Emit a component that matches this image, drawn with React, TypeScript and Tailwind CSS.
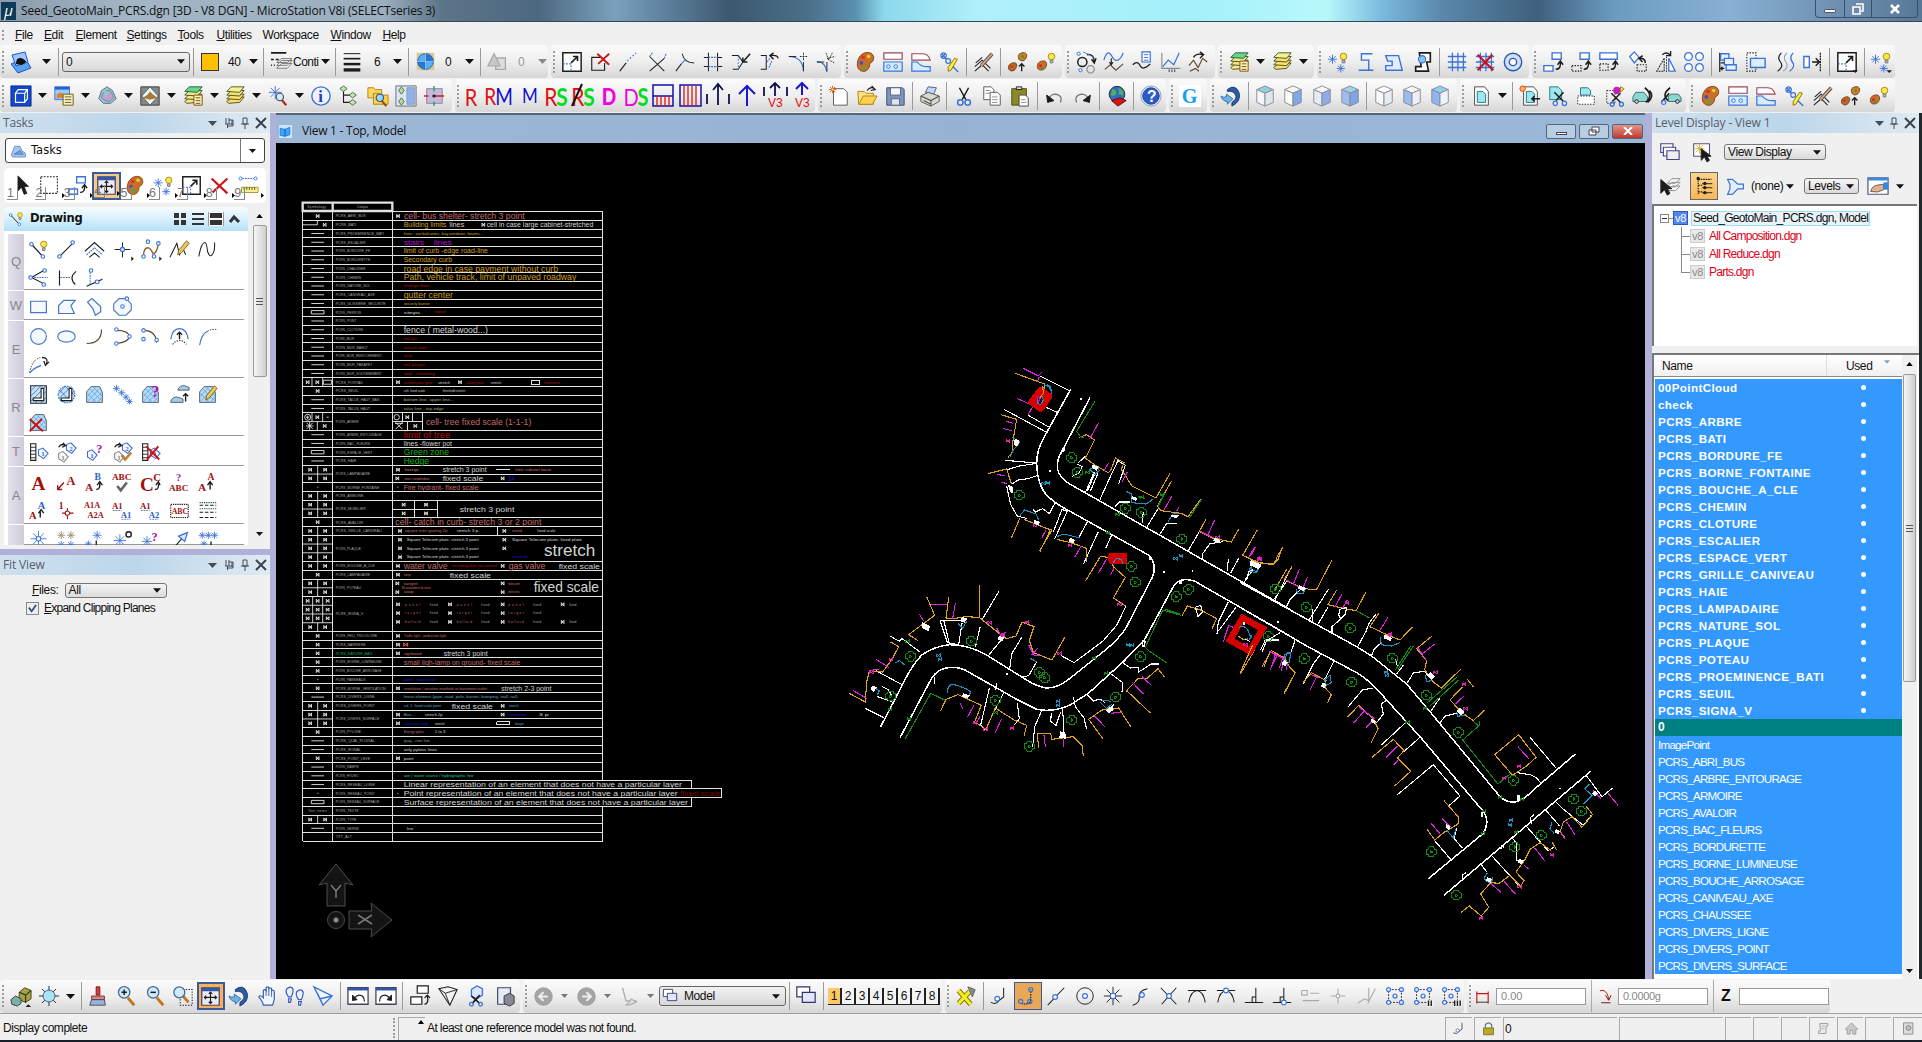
import React from "react";

/* ---------- icon primitives ---------- */
type Shape = [d: string, stroke?: string, fill?: string, width?: number, dash?: string];
type Glyph = { t: string; x: number; y: number; s: number; c: string; f?: string };
type Item = Shape | Glyph;

const B = "#3a72d8";
const K = "#1c1c1c";
const G = "#8a8a8a";
const R = "#c81414";
const N = "none";
const o = (x: number, y: number, r: number) => `M${x - r} ${y}a${r} ${r} 0 1 0 ${2 * r} 0a${r} ${r} 0 1 0 ${-2 * r} 0`;
const box = (x: number, y: number, w: number, h: number) => `M${x} ${y}h${w}v${h}h${-w}z`;
const T = (t: string, x: number, y: number, s: number, c: string, f = "Liberation Serif"): Glyph => ({ t, x, y, s, c, f });

const bulb: Item[] = [[o(18, 6, 3.6), "#a08a20", "#ffe640"], ["M16.5 10h3v3h-3z", "#777", "#bbb"]];
const palette: Item[] = [
  ["M12 2c7-2 11 3 9 8-1 3-4 2-4 5 0 4-3 8-8 7-5-1-6-6-5-11C5 7 8 3 12 2z", "#7a4210", "#c8702a"],
  [o(10, 7, 2), N, "#e03020"], [o(16, 6, 2), N, "#e8d030"], [o(8, 13, 2), N, "#3a50d0"], [o(11, 18, 2), N, "#40b040"],
];
const pencil: Item[] = [["M20 2l3 3-9 11-4 2 1-5z", "#7a5a20", "#e8c860"]];
const star = (x: number, y: number, r: number, col = B): Shape => [
  `M${x - r} ${y}h${2 * r}M${x} ${y - r}v${2 * r}M${x - r * 0.7} ${y - r * 0.7}l${r * 1.4} ${r * 1.4}M${x + r * 0.7} ${y - r * 0.7}l${-r * 1.4} ${r * 1.4}`, col, N, 1,
];
const layers = (top: string, mid: string): Item[] => [
  ["M3 18l5-4 14-1-5 6-12 1z", "#4a4a20", mid], ["M3 15l5-5 14 0-5 6z", "#4a4a20", mid],
  ["M3 11l5-5 14 0-5 6z", "#4a4a20", mid], ["M3 7l5-5 14 0-5 6z", "#2c5a30", top],
];
const cube = (a: string, b: string, c: string): Item[] => [
  ["M12 1l9 4-9 4-9-4z", G, a], ["M3 5l9 4v14l-9-4z", G, b], ["M21 5l-9 4v14l9-4z", G, c],
];
const hatchPoly: Item[] = [
  ["M3 21V9l5-6h10l3 7v11z", "#456", "#b4dcf6"],
  ["M4 14l9-10M4 20L18 5M9 21L21 9M15 21l6-6M4 11l10 10M7 6l13 13M11 4l10 10", "#5a96d8", N, 0.8],
];
const page: Item[] = [["M5 2h11l4 5v15H5z", "#444", "#fff"], ["M8 7h6l3 3v9H8z", "#2a7080", "#9ce8f0"]];
const magnifier: Item[] = [["M14 14l7 8", "#c07820", N, 3.2], [o(10, 8, 6.2), "#456a90", "#cfe8fb", 1.4]];
const swirl: Item[] = [
  ["M8 5q9-7 13 4 2 9-8 14v-4q6-4 4-8-2-5-9-4z", "#14386c", "#2e5ca4"], ["M1 12q2 2 6 1v-3l7 5-6 6v-3q-5 0-7-6z", "#2e6ca4", "#6ab4ea"],
];
const cutter: Item[] = [["M7 3l7 13M17 3l-7 13", K, N, 1.6], [o(8, 19, 3), B, N, 1.6], [o(16, 19, 3), B, N, 1.6]];
const tag = (x: number, y: number, n: string, col: string): Item[] => [
  [`M${x - 5} ${y - 4}l5-2 6 6-5 6-6-4z`, col, "#f4f8ff", 1.2], T(n, x - 2, y + 3, 8, col),
];
const snapBox: Item[] = [[box(5, 5, 14, 14), K, N, 1, "2 1.5"], ...[[5, 5], [19, 5], [5, 19], [19, 19], [12, 12]].map(([x, y]) => [o(x, y, 2.2), B, "#e8f0ff", 1.3] as Shape)];
const corner: Shape = ["M18 21h6l-3 3z", N, K];
const scaleBox: Item[] = [[box(2, 2, 20, 20), K, "#fff", 1.6], ["M2 14h9v8", B, N, 1.2, "2 1.5"], ["M11 13l7-7M13 6h5v5", K, N, 1.8]];
const bulbStars: Item[] = [star(6, 9, 5), star(15, 19, 4.5), ...bulb];

const icons: Record<string, Item[]> = {
  attr: [["M2 14l14-6 6 10-13 5z", "#1b5ac0", "#5aa0f0"], ["M3 5l13-3 3 10-12 4z", "#1b5ac0", "#9cc8ff"], ["M7 14q0-7 5-6 5 2 5 4l-4 3z", N, "#111"]],
  lstyle: [["M1 3h16M1 10h3M6 10h3M1 16h1M4 16h1", K, N, 1.6], ["M7 19l5-5h11l-5 5zM7 16l5-5h11l-5 5zM7 13l5-4h11l-5 4z", "#777", "#f4f4f4"]],
  weight: [["M2 2h20", K, N, 1.2], ["M2 8h20", K, N, 2], ["M2 14.500h20", K, N, 3], ["M2 21.500h20", K, N, 4]],
  globe: [[box(2, 2, 20, 20), N, "#d6c890"], [o(12, 12, 9), "#2464b8", "#58b0f4"], ["M12 3v18M3 12h18", "#fff", N, 1], ["M12 3a9 9 0 0 1 9 9h-9zM12 21a9 9 0 0 1-9-9h9z", N, "#2478d0"]],
  prio: [[box(10, 8, 11, 13), "#aaa", "#ddd", 1.6], ["M8 3l7 14H1z", "#aaa", "#c8c8c8", 1.4]],
  scaleBox,
  scaleBox2: [...scaleBox, corner],
  delBox: [["M12 7H3v14h14v-8", K, N, 1.2], ["M9 3l13 12M22 3L10 14", R, N, 2]],
  line1: [["M3 22l7-9", K, N, 1.2], ["M11 11l10-9", B, N, 1.2, "2 2"]],
  crossX: [["M4 22L20 8M20 22L4 6", K, N, 1.1], ["M4 6l3-4M20 8l2-5", B, N, 1.2, "2 1"]],
  trimT: [["M9 3q2 10 13 10M2 22l6-8", K, N, 1.1], ["M8 14l4-4", B, N, 1.2]],
  hash: [["M7 2v20M17 2v20M2 7h5M17 7h5M2 17h5M17 17h5", K, N, 1.1], ["M7 7h10M7 17h10", B, N, 1.2, "2 1"]],
  chamfer: [["M2 5h7l5 7-5 8H3", K, N, 1.1], ["M9 5v15", B, N, 1, "2 1.5"], ["M22 3l-7 8M14 7v5h5", K, N, 1.6]],
  bracket: [["M3 5h6v15H3", K, N, 1.1], ["M10 12l3-4M12 18l3-7", B, N, 1.2, "2 1"], ["M22 8q-1-4-8-3M17 2l-4 3 4 4", K, N, 1.5]],
  fillet: [["M2 6q15 0 16 16", B, N, 1.3], ["M18 2v8M14 6h8", K, N, 1, "2 1"], ["M18 12v10M2 6h8", K, N, 1]],
  starCorner: [["M2 12q9-1 11 11", B, N, 1.3], ["M2 12h8M13 12v10", K, N, 1], ["M13 8l9-2M12 2l3 8M21 13l-7-4M19 2l-4 7", K, N, 0.9, "2 1"]],
  palette,
  boxes: [[box(2, 2, 20, 7), "#9a4858", "#fff", 1.3], [box(2, 12, 20, 10), B, "#d4ecff", 1.3], [o(7, 17, 2), B, N], [o(15, 17, 2), B, N]],
  shapes: [["M2 3h12q6 0 8 7H2z", "#9a4858", "#fff", 1.2], ["M2 12h6q4 6 14 5v5H2z", B, "#d4ecff", 1.3]],
  penlink: [["M3 3l5 6M3 7l4-4M13 15l8 8", B, N, 1.5], [o(5, 5, 3), B, N, 1.3], [o(10, 11, 2.6), B, N, 1.3], ["M17 8l3 1-7 12-3 1 0-4z", "#857000", "#ffee40"]],
  pencils: [["M2 17l8-7 9 9M2 22l8-7 7 7M3 13l7-6", K, N, 1.1], ["M9 16L21 3", "#6a4848", N, 4], ["M9 16L21 3", "#c8b088", N, 2]],
  palettes2: [["M4 14c5-3 8 0 6 4-1 4-6 5-8 2-1-3 0-5 2-6z", "#7a4210", "#b8682a"], ["M14 3c5-3 9 0 7 4-1 4-6 5-8 2-1-3-1-5 1-6z", "#7a4210", "#c8802a"], [o(5, 17, 1.3), N, "#e02020"], [o(17, 6, 1.5), N, "#30a040"], ["M16 22v-8M13 17l3-3 3 3", K, N, 1.5]],
  paletteBulb: [["M5 12c6-3 9 0 7 5-1 4-7 5-9 2-1-3 0-6 2-7z", "#7a4210", "#c8702a"], [o(6, 16, 1.6), N, "#e02020"], [o(8, 19, 1.4), N, "#30a040"], ...bulb],
  circArrow: [[o(8, 12, 5), K, N, 1.6], [o(4, 3, 1.8), B, N], [o(17, 20, 4), G, N, 1.3], [o(6, 21, 1.8), B, N], ["M13 4q8-1 8 8M18 9l3 4 2-5", K, N, 1.6], ["M9 1l12 6", B, N, 1]],
  curveDown: [["M1 10C5-4 9 4 11 8s8 3 11-6", B, N, 1.4], ["M2 20l6-5 6 6 8-7", "#5c4a30", N, 1.2], ["M9 8v7M7 12l2 3 2-3", K, N, 1.2]],
  curveList: [["M2 15q5-5 8 1t11-2", K, N, 1.4], [box(12, 1, 9, 11), B, "#fff", 1.3], ["M14 4h5M14 7h5M14 10h5", B, N, 1]],
  graph: [["M2 2v17h20", G, N, 1.2], ["M3 17l6-7 6 5 6-13", B, N, 1.3], ["M10 20v3M13 20v3M16 20v3", K, N, 0.9]],
  curveArrow: [["M1 16l5-6 5 8 5-10 5 4M2 22l6-3 4 3", "#5c4a30", N, 1.3], ["M6 7q3-5 10-3M13 1l4 3-4 4", K, N, 1.5]],
  stackGreen: [...layers("#60d890", "#f6e88a"), [box(13, 11, 9, 11), "#6a5010", "#fff2b0"], ["M15 14h5M15 17h5M15 20h5", "#6a5010", N, 1]],
  stackYellow: layers("#fff08a", "#f6e070"),
  bulbStars,
  bulbStars2: [...bulbStars, corner],
  polyBlue: [["M19 3H7v7h8v11H4M15 21h5", B, N, 1.5]],
  polyBlue2: [["M3 5h14l4 16H3v-5h7v-5H5z", B, "#e0edff", 1.5]],
  polyBlack: [["M8 2h12v10h-4l2 10H4v-5h6z", K, "#fff", 1.8], [o(11, 9, 4), B, "#8ac0f0", 1.2]],
  grid: [["M7 2v20M13 2v20M19 2v20M2 6h20M2 12h20M2 18h20", B, N, 1.4]],
  gridX: [["M7 2v20M13 2v20M19 2v20M2 6h20M2 12h20M2 18h20", B, N, 1.4], ["M4 4l17 17M20 4L4 21", R, N, 2.4]],
  donut: [[o(12, 12, 9.5), "#2a58b0", "#cfe0f8", 1.5], [o(12, 12, 4), "#2a58b0", "#fff", 1.5]],
  copyUp: [[box(11, 2, 10, 7), B, "#fff", 1.5], [box(2, 16, 10, 6), B, "#fff", 1.5], ["M15 20q6 0 5-8M17 15l3-4 3 4", K, N, 1.6]],
  moveUp: [[box(11, 2, 10, 7), B, "#fff", 1.5], [box(2, 16, 10, 6), K, N, 1.2, "1.5 1.5"], ["M15 20q6 0 5-8M17 15l3-4 3 4", K, N, 1.6]],
  stretch: [[box(2, 2, 19, 7), B, "#fff", 1.5], [box(2, 14, 9, 7), K, N, 1.2, "1.5 1.5"], ["M14 20q6 0 5-8M16 15l3-4 3 4", K, N, 1.6]],
  rotate: [["M3 6l5-5 5 6-5 6z", B, "#fff", 1.4], [box(11, 15, 10, 7), K, N, 1.2, "1.5 1.5"], ["M20 13q0-5-6-5M17 5l-4 3 4 4", K, N, 1.6]],
  mirror: [["M10 8v14H2z", K, N, 1.1, "2 1"], ["M15 8v14h7z", B, "#fff", 1.4], ["M8 4q5-4 9 1M17 0v5h-5", K, N, 1.5], ["M12.500 6v17", K, N, 0.9, "2 1"]],
  array: [[6, 6], [18, 6], [6, 18], [18, 18]].map(([x, y]) => [o(x, y, 4.2), B, "#fff", 1.4] as Shape),
  align: [["M3 2v21", K, N, 1.3], [box(4, 3, 9, 7), B, "#e8f2ff", 1.4], [box(8, 8, 10, 7), B, "#e8f2ff", 1.4], [box(10, 15, 11, 6), B, "#e8f2ff", 1.4], ["M8 19H4M6 17l-2 2 2 2M8 13H4", K, N, 1.3]],
  overlap: [[box(2, 2, 10, 20), K, N, 1.2, "1.5 1.5"], [box(6, 8, 16, 10), B, "#dcecff", 1.5]],
  curves2: [["M8 2q-5 5-1 10T4 22", K, N, 1.3], ["M14 2q-5 5-1 10t-3 10", "#8899bb", N, 1.1], ["M21 2q-5 5-1 10t-3 10", B, N, 1.4]],
  snapEnd: [[box(2, 6, 6, 12), B, "#fff", 1.5], ["M11 12h7M15 8l4 4-4 4", K, N, 1.6], ["M20 2v20", K, N, 1.4, "2 1"]],
  cubeBtn: [[box(1, 1, 22, 22), "#0a2a90", "#1248c8"], ["M6 9h10v10H6zM6 9l3-4h10v10l-3 4M16 9l3-4", "#fff", N, 1.3]],
  imgList: [[box(2, 2, 16, 14), B, "#8fd0ff"], [box(2, 2, 16, 3), N, "#2a60c8"], ["M4 15v-5l5-2 4 5z", N, "#e08030"], [box(11, 10, 11, 12), "#6a5010", "#fff2b0"], ["M13 13h7M13 16h7M13 19h7", "#555", N, 1]],
  clipVol: [["M3 15l3-9 6-4 6 4 4 9-6 5H8z", "#5a6a88", "#98c4d4"], ["M6 14q1-7 6-8t7 8l-4 4-5-1z", "#68a", "#c4a0cc"], ["M8 5l6 3-3 5z", N, "#80d8c8"]],
  mountain: [[box(2, 2, 20, 20), "#333", "#888"], ["M12 2l9 10-9 10-9-10z", "#555", "#e4f8f4"], ["M4 14l5-3 3-4 3 3 5 4-8 2z", N, "#a87838"]],
  searchStar: [star(9, 8, 7), ["M15 15l6 7", "#c02020", N, 2.4], [o(14, 13, 4), "#456", "#d8e8f8", 1.3]],
  info: [[o(12, 12, 10), B, "#eef4ff", 1.5], { t: "i", x: 9, y: 18, s: 18, c: "#1c3cc0", f: "Liberation Serif" }],
  tree: [["M6 4v15h8M6 11h8", K, N, 1.2], ["M6 1l4 3-4 3-4-3zM16 8l4 3-4 3-4-3zM16 16l4 3-4 3-4-3z", "#4a6a3a", "#c8e0b8"]],
  folderSearch: [["M1 3h6l2 2h7v9H1z", "#b08010", "#ffd860"], ["M7 9h6l2 2h8v10H7z", "#b08010", "#ffd040"], ["M16 17l5 6", "#805010", N, 2.2], [o(14, 14, 4), "#2a5a90", "#9cd8ff", 1.3]],
  keyPress: [[box(1, 1, 22, 22), "#667", "#dce6f4"], ["M7 2l3 4-3 4-3-4zM7 14l3 4-3 4-3-4z", "#4a6a3a", "#b8d8a0"], [box(13, 3, 8, 18), "#89b", "#8fb4e8"]],
  target: [[box(4, 4, 17, 16), "#888", "#c8b8e0"], ["M12 12h11M1 12h5", "#d02020", N, 1.4], ["M12 1v6M12 18v5", "#20a060", N, 1.5], ["M10 12h4M12 10v4", "#222", N, 1.4]],
  newFile: [["M6 4h11l4 4v14H6z", "#555", "#fff"], star(5, 5, 4, "#e04010"), [o(5, 5, 1.5), "#e08000", "#ffe060"]],
  open: [["M2 7h7l2 2h8v12H3z", "#b08010", "#ffe080"], ["M3 21l5-9h15l-5 9z", "#b08010", "#ffd250"], ["M12 6q4-5 8-2M17 1l4 4-5 1", K, N, 1.3]],
  save: [["M3 3h17l2 2v17H3z", "#3a4a70", "#8094c0"], [box(7, 3, 11, 8), "#567", "#f4f6fa"], [box(8, 15, 9, 7), "#567", "#dfe4ee"]],
  printer: [["M7 8l3-6 9 1-3 7z", "#557", "#bcd8f8"], ["M2 12l8-4 12 4v6l-9 5-11-5z", "#555", "#d8d8d0"], ["M2 12l11 5 9-5M13 17v6M5 17l8 4", "#555", N, 1.2]],
  cut: cutter,
  copy: [["M3 2h8l3 3v11H3z", "#555", "#fff"], ["M10 8h8l3 3v11H10z", "#555", "#fff"], ["M5 6h5M5 9h5M12 13h6M12 16h6M12 19h6", G, N, 1]],
  paste: [[box(3, 4, 16, 18), "#4a4a10", "#8a8a28"], ["M8 5V2h6v3z", K, "#ddd"], ["M11 11h7l3 3v9H11z", "#444", "#fff"], ["M13 16h5M13 19h6", G, N, 1]],
  undo: [["M19 19q3-8-6-9-3 0-7 4", "#777", N, 1.3], ["M4 11l1 8 7-2z", K, K]],
  redo: [["M5 19q-3-8 6-9 3 0 7 4", "#777", N, 1.3], ["M20 11l-1 8-7-2z", K, K]],
  world: [[o(12, 10, 8.5), "#223", "#3070c0"], ["M7 4q5 1 4 6-3 3-6 1M14 3q6 3 5 8l-5-1z", N, "#50b060"], ["M6 17l9-3 7 3-9 6z", "#600", "#d01818"]],
  help: [[o(12, 12, 11), "#8898b0", "#f4f6fa"], [o(12, 12, 9), "#1a3a90", "#2a5cc8"], { t: "?", x: 7.5, y: 18, s: 17, c: "#fff", f: "Liberation Sans" }],
  google: [[box(0, 0, 24, 24), N, "#fff"], { t: "G", x: 3, y: 19.5, s: 22, c: "#18a0f0", f: "Liberation Serif" }],
  swirl,
  cubeT: cube("#8fd0e8", "#f4f6fa", "#e0e6f0"), cubeR: cube("#f4f6fa", "#fdfdfd", "#80a8e8"), cubeB: cube("#f4f6fa", "#e4eaf8", "#8cacec"),
  cubeF: cube("#9cd0ec", "#a0bcf0", "#80a4e8"), cubeW: cube("#fdfdfd", "#fafafc", "#e8ecf4"), cubeL: cube("#f4f6fa", "#9cbcf0", "#eef0f8"), cubeA: cube("#8fd0f0", "#90b4f0", "#f0f4fa"),
  page,
  pageIn: [...page, ["M23 15h-9M17 12l-3 3 3 3", K, N, 1.6], [o(4, 4, 3), "#e04010", "#ffb060"]],
  pageCut: [["M3 2h9l4 4v10H3z", "#2a7080", "#9ce8f0"], ["M8 8l10 10M18 8L10 17", K, N, 1.6], [o(9, 20, 2.4), B, N, 1.4], [o(19, 20, 2.4), B, N, 1.4]],
  pageDash: [["M6 3h8l3 3v5H6z", "#2a7080", "#9ce8f0"], [box(3, 12, 18, 9), K, "#fff", 1, "1.5 1.5"]],
  pageBrush: [[box(3, 6, 9, 14), K, N, 1, "1.5 1.5"], [o(14, 6, 4), N, "#c020c0"], ["M8 9l10 10M18 9L9 18", K, N, 1.6], ["M18 2l4 2-4 4z", "#a70", "#fd6"], [o(9, 21, 2.2), B, N, 1.4], [o(19, 21, 2.2), B, N, 1.4]],
  carR: [["M1 13l3-5h9l4 5v5H1z", "#2a7070", "#8cd8d0"], [o(5, 18, 2), K, "#cce"], ["M14 3q10 8 1 16M19 6q6 6-2 13", K, N, 1.8]],
  carL: [["M9 13l3-3h8l3 4v4H9z", "#2a7070", "#8cd8d0"], [o(19, 18, 2), K, "#cce"], ["M11 3q-10 8-2 14M2 18q6-6 8-9", K, N, 1.8], [o(4, 19, 2.3), B, N, 1.3]],
  /* task tools */
  pointer: [["M8 1v17l4-4 3 8 3-1-3-8h5z", K, K]],
  fence: [[box(2, 2, 19, 19), K, "#fff", 1.2, "2 1.5"]],
  fit: [[box(2, 2, 20, 20), "#445", "#eceaf4", 1.4], [box(2, 2, 20, 4), N, "#3458a8"], ["M12 7v13M5 13h14M10 9l2-2 2 2M10 18l2 2 2-2M7 11l-2 2 2 2M17 11l2 2-2 2", K, N, 1.3]],
  del: [["M3 4l18 17M21 4L4 20", "#d01010", N, 2.4]],
  measure: [[o(3, 4, 1.8), B, N], [o(20, 4, 1.8), B, N], ["M5 4h13", B, N, 1.2, "2 1"], [box(4, 14, 19, 6), "#a09030", "#f8f090"], ["M7 14v3M10 14v3M13 14v3M16 14v3M19 14v3", K, N, 0.8]],
  smartLine: [["M4 6l12 13", K, N, 1.4], [o(4, 6, 2), B, "#fff", 1.3], [o(17, 20, 2), B, "#fff", 1.3], ...bulb],
  line: [["M4 20L19 5", K, N, 1.2], [o(4, 20, 2), B, "#fff", 1.3], [o(19, 4, 2), B, "#fff", 1.3]],
  multi: [["M1 14L12 4l11 10", K, N, 1.2], ["M3 18l9-8 9 8", B, N, 1.3, "2 1"], ["M6 21l6-5 6 5", K, N, 1.2]],
  point: [["M12 4v17M3 12h18", K, N, 1.1], [o(12, 12, 2.4), B, "#cfe0ff", 1.3], ["M22 20l3 2.500-3 2.500z", N, K]],
  spline: [["M4 20q0-10 5-10 3 0 6 7 4-1 6-11", "#8a6030", N, 1.5], [o(4, 20, 2), B, "#fff", 1.3], [o(9, 3, 2), B, "#fff", 1.3], [o(21, 5, 2), B, "#fff", 1.3], [o(16, 20, 2), B, "#fff", 1.3], ["M22 20l3 2.500-3 2.500z", N, K]],
  sketch: [["M1 21L9 5l3 13 4-7 3 7", K, N, 1.2], ...pencil],
  wave: [["M2 20Q5 4 9 4q2 0 3 10 2 6 4 5 5-3 4-15", K, N, 1.2]],
  bisect: [["M4 12L18 4M4 12l14 7", K, N, 1.2], ["M4 12h19", B, N, 1.2, "2 1"], [o(3, 12, 2), B, "#fff", 1.3], [o(19, 4, 2), B, "#fff", 1.3], [o(18, 20, 2), B, "#fff", 1.3]],
  minDist: [["M4 4v17M23 5q-9 7-1 15", K, N, 1.3], ["M5 12h12", B, N, 1.2, "2 1"]],
  angleLn: [["M3 22l18-8", K, N, 1.3], ["M7 6v14", B, N, 1.2, "2 1"], [o(8, 4, 2), B, "#fff", 1.3], [o(15, 17, 2.2), B, "#fff", 1.3]],
  rect: [[box(3, 6, 18, 13), "#4a78c0", "#f4f8ff", 1.4]],
  poly: [["M3 20v-9l6-6h13l-5 6 4 9z", "#4a78c0", "#f4f8ff", 1.4]],
  ortho: [["M4 7l5-4 10 9 0 6-6 4-3-8z", "#4a78c0", "#f4f8ff", 1.4]],
  regPoly: [["M8 3h8l6 6v7l-6 6H8l-6-6V9z", "#4a78c0", "#f4f8ff", 1.3], [o(12, 12, 2), B, "#fff", 1.2], [o(17, 3, 2), B, "#fff", 1.2]],
  circle: [[o(12, 12, 9), "#4a78c0", "#f4f8ff", 1.3]],
  ellipse: [["M2 12a10 6.500 0 1 0 20 0a10 6.500 0 1 0-20 0", "#4a78c0", "#f4f8ff", 1.3]],
  arc: [["M3 20Q20 20 20 4", "#554430", N, 1.3]],
  halfArc: [["M5 5q14 0 15 7-2 7-15 8", "#554430", N, 1.3], [o(5, 4, 2), B, "#fff", 1.2], [o(20, 12, 2), B, "#fff", 1.2], [o(5, 20, 2), B, "#fff", 1.2]],
  qArc: [["M4 5q14 0 15 14", "#554430", N, 1.3], [o(4, 5, 2), B, "#fff", 1.2], [o(4, 15, 2), B, "#fff", 1.2], [o(19, 16, 2), B, "#fff", 1.2]],
  modArc: [["M2 15Q4 3 12 3t10 12", B, N, 1.3], ["M4 21q8-9 16 0", K, N, 1.2, "1.5 1.500"], ["M12 15V7M9 10l3-3 3 3", K, N, 1.6]],
  arc2: [["M3 22Q5 9 12 6", B, N, 1.3], ["M12 6q5-3 10-2", K, N, 1.1, "1.5 1.5"]],
  arc3: [["M2 21Q5 6 14 4", K, N, 1.1, "1.5 1.5"], ["M2 22q3-5 13-9", B, N, 1.3], ["M16 4q8 0 5 8M24 9l-4 4-2-5", K, N, 1.5]],
  hatch: [[box(3, 2, 18, 20), "#223", "#c8e4f4", 1.2], ["M3 8l6-6M3 14L15 2M3 20L21 2M8 22L21 8M14 22l7-7", B, N, 1], ["M15 5v11H6v3h12V5z", K, "#fff", 1.2]],
  crossHatch: [[o(12, 12, 9.5), B, "#c8e4f4", 1.2, "2 1"], ["M4 10l7-8M3 17L17 3M8 21L21 8M4 7l14 14M10 2l12 12", B, N, 1], ["M15 5v11H6v3h12V5z", K, "#fff", 1.2]],
  pattern: hatchPoly,
  linPat: [star(5, 5, 4), star(11, 10, 4), star(16, 15, 4), star(20, 20, 3.5)],
  patQ: [...hatchPoly, T("?", 13, 15, 18, "#b010b0")],
  patMove: [["M2 20q2-6 8-5l6 2v4H2zM10 7q2-6 8-5l5 2v3z", "#456", "#a4cce8"], ["M19 20v-9M16 14l3-3 3 3", K, N, 1.6]],
  patEdit: [...hatchPoly, ...pencil],
  patDel: [...hatchPoly, ["M2 8l15 14M16 8L2 22", "#d01010", N, 2.2]],
  tags: [[box(3, 2, 6, 19), K, "#fff", 1.2], ["M3 6h6M3 10h6M3 14h6M3 18h6", K, N, 1], ...tag(17, 13, "1", "#3a6ad0")],
  tagEdit: [...tag(8, 17, "1", "#888"), ...tag(17, 7, "2", "#3a6ad0"), ["M3 6q3-5 8-2M8 1l3 3-4 2", K, N, 1.5]],
  tagQ: [...tag(9, 15, "1", "#3a6ad0"), T("?", 14, 12, 14, "#b010b0")],
  tagChk: [...tag(8, 17, "1", "#888"), ...tag(17, 7, "2", "#3a6ad0"), ["M11 15l4 5 7-8", "#c08030", N, 3], ["M3 6q3-5 8-2M8 1l3 3-4 2", K, N, 1.5]],
  tagDel: [[box(3, 2, 6, 19), K, "#fff", 1.2], ["M3 6h6M3 10h6M3 14h6M3 18h6", K, N, 1], ...tag(17, 13, "1", "#3a6ad0"), ["M7 5l15 15M21 5L8 20", "#d01010", N, 2.2]],
  tA: [T("A", 4, 20, 22, "#a01010")],
  tNote: [["M2 20l7-8M2 15v5h5", "#a01010", N, 1.6], T("A", 12, 15, 14, "#a01010")],
  tAB: [T("A", 1, 22, 13, "#a01010"), T("B", 12, 9, 11, "#3060c8"), ["M14 20q5 0 4-8M15 15l3-4 3 4", K, N, 1.6]],
  tABC: [T("ABC", 0, 9, 10.5, "#a01010"), ["M6 16l4 5 7-9", "#666", N, 3]],
  tCC: [T("C", 0, 22, 22, "#a01010"), T("C", 15, 10, 12, "#a01010"), ["M17 20q5 0 4-7M18 15l3-4 2 4", K, N, 1.5]],
  tABCq: [T("ABC", 0, 22, 10.5, "#a01010"), T("?", 8, 10, 12, "#b010b0")],
  tAa: [T("A", 1, 22, 13, "#a01010"), T("A", 12, 9, 11, "#a01010"), ["M15 20v-8M12 15l3-4 3 4", K, N, 1.6]],
  tAi: [T("A", 1, 22, 12, "#a01010"), T("A", 11, 10, 12, "#3060c8"), ["M14 20v-7M12 15l3-4 3 4", K, N, 1.6]],
  t1: [T("1", 3, 10, 11, "#a01010"), ["M13 9v13M7 15h13", "#a01010", N, 1.2], [o(13, 15, 2.5), "#a01010", "#fff", 1.2]],
  tA1A: [T("A1A", 0, 9, 9.5, "#a01010"), T("A2A", 4, 21, 9.5, "#a01010")],
  tA1: [T("A1", 0, 10, 10, "#a01010"), ["M1 12h10", B, N, 1, "2 1"], T("A1", 10, 20, 10, "#3060c8"), ["M11 22h10", B, N, 1, "2 1"]],
  tA2: [T("A1", 0, 10, 10, "#a01010"), ["M1 12h10", B, N, 1, "2 1"], T("A2", 10, 20, 10, "#3060c8"), ["M11 22h10", B, N, 1, "2 1"]],
  tBox: [[box(2, 5, 20, 15), K, N, 1.2, "1.5 1"], T("ABC", 3, 16, 9, "#a01010")],
  tLines: [["M3 3h19M3 10h19", "#206060", N, 1.2, "1.5 1"], ["M3 6h19M3 14h19M3 20h19", K, N, 1.2, "4 2"]],
  cell: [star(12, 10, 9), [o(12, 10, 2.6), B, "#fff", 1.2]],
  cells: [star(6, 6, 4.5, "#987"), star(17, 6, 4.5, "#987"), star(6, 17, 4.5), star(17, 17, 4.5)],
  cellUp: [star(15, 6, 5), star(5, 16, 4), ["M14 20v-8", K, N, 1.5]],
  cellO: [star(9, 12, 7), [o(19, 5, 3), K, N, 1.6]],
  cellQ: [star(8, 13, 6), T("?", 13, 12, 14, "#b010b0")],
  cellArr: [["M4 22L18 6", K, N, 1.3], ["M11 7l10-4-3 10z", B, "#dce8ff", 1.4]],
  cellG: [star(6, 6, 4), star(13, 6, 4), star(20, 6, 4), star(8, 16, 4), ["M16 20v-7", K, N, 1.6]],
  book: [["M2 6l9 2v13l-9-2zM20 4l-9 4v13l9-3z", "#0a50b0", "#3aa8ff"]],
  user: [["M2 18l5-13h8l3 7 5 3v6H4z", "#5a80b8", "#a8c8f4", 1.2], ["M6 17l9-6 5 6z", "#4a70b0", "#6a9ce8"]],
  /* bottom tools */
  cubes: [["M10 8l6-5 7 3v9l-6 4-7-3z", "#3a4a10", "#a8a048"], ["M10 8l7 3 6-5M17 11v8", "#2a3210", N, 1.2], ["M1 16l5-4 6 3v5l-4 3-6-2z", "#334", "#7ab0a8"], ["M17 24h6l-3-3z", N, K]],
  sun: [star(12, 12, 11, K), [o(12, 12, 6.5), "#458", "#a8e4f4"]],
  brush: [["M10 2h4v9h-4z", "#801010", "#d04040"], ["M5 12h14v4H5z", "#733", "#d88"], ["M5 16h14l1 6H3z", "#445", "#9ab4d8"]],
  zoomIn: [...magnifier, ["M7 8h6M10 5v6", K, N, 1.6]],
  zoomOut: [...magnifier, ["M7 8h6", K, N, 1.6]],
  zoomBox: [[box(9, 5, 13, 17), K, N, 1.1, "1.5 1.5"], ["M12 12l6 7", "#c07820", N, 3], [o(8, 8, 6), "#456a90", "#cfe8fb", 1.4]],
  hand: [["M8 22q0-3-5-9 1-3 5 1V6q1.500-2 3 0V3q1.500-2 3 0v1q1.500-2 3 0v2q2-1 3 1v8q-1 5-2 7z", "#3a5ca8", "#f0f5ff", 1.3], ["M11 5v7M14 4v8M17 6v7", "#3a5ca8", N, 1]],
  feet: [["M3 4q5-4 7 1 0 4-2 8H5Q1 8 3 4zM5 15h3l-1 4H5zM14 7q5-4 7 1 0 4-2 8h-3q-4-5-2-9zM16 18h3l-1 4h-2z", "#3a5cb8", "#e8f0ff", 1.3]],
  plane: [["M2 2l20 10-10 10-3-7zM2 2l10 20M9 15l13-3", B, "#eef5ff", 1.4]],
  viewPrev: [[box(1, 3, 22, 18), "#445", "#fff", 1.4], [box(1, 3, 22, 3), N, "#3458a8"], ["M19 18q0-7-6-7-2 0-5 3", K, N, 1.3], ["M6 11v6l5-1z", K, K]],
  viewNext: [[box(1, 3, 22, 18), "#445", "#fff", 1.4], [box(1, 3, 22, 3), N, "#3458a8"], ["M5 18q0-7 6-7 2 0 5 3", K, N, 1.3], ["M18 11v6l-5-1z", K, K]],
  viewCopy: [[box(9, 1, 12, 8), K, "#fff", 1.3], [box(2, 13, 12, 8), K, "#fff", 1.3], ["M17 21q5-1 3-9M17 14l3-3 3 3", K, N, 1.4]],
  cone: [["M2 4l10-2 10 3-8 17z", K, "#f4f4f4", 1.1], ["M2 4l7 5 13-4M9 9l5 13", K, N, 1]],
  clipCube: [["M7 5l6-4 6 3v7l-6 4-6-3z", B, "#d8e8ff", 1.4], ["M7 12l9 8M16 11l-8 9", K, N, 1.8], [o(7, 21, 2), B, N, 1.4], [o(17, 21, 2), B, N, 1.4]],
  mask: [["M4 3h14v16l-4 2H4z", "#446", "#e4ecf8", 1.3], ["M11 12l6-3 5 3v8l-5 3-6-3z", "#333", "#889"]],
  back: [[o(12, 12, 10), "#999", "#a4a4a4"], ["M17 12H8M12 7l-5 5 5 5", "#eee", N, 2.4]],
  fwd: [[o(12, 12, 10), "#999", "#a4a4a4"], ["M7 12h9M12 7l5 5-5 5", "#eee", N, 2.4]],
  slope: [["M4 2l4 15h12", "#aaa", N, 1.4], ["M8 22q6 0 12-4l-6-3z", "#aaa", "#ddd", 1.2]],
  sheets: [[box(2, 2, 14, 11), "#336", "#fff", 1.3], [box(8, 8, 14, 11), "#336", "#e4e4fa", 1.3]],
  acs: [["M4 6l13 15M16 7L4 20", "#807000", N, 5.5], ["M4 6l13 15M16 7L4 20", "#f4ee20", N, 3.5], ["M14 2l8 3-3 8-2-4z", "#666", "#888"]],
  snapNear: [["M2 19q6 3 9-2l5-4V3", K, N, 1.1], [o(9, 15, 2.6), B, "#fff", 1.3]],
  snapKey: [["M4 20q8 2 11-2V5", K, N, 1.2, "2 1"], [o(15, 5, 2.3), B, N, 1.3], [o(4, 18, 2.3), B, N, 1.3], [o(14, 18, 2.3), B, N, 1.3]],
  snapMid: [["M3 22L21 3", K, N, 1.1], [o(11, 13, 2.6), B, "#fff", 1.3]],
  snapCtr: [[o(12, 12, 9), K, N, 1], [o(12, 12, 2.6), B, "#fff", 1.3]],
  snapOrg: [star(12, 12, 10, K), [o(12, 12, 3), B, "#fff", 1.3]],
  snapBis: [["M3 22q8-2 7-9t9-9", K, N, 1.1], [o(13, 11, 2.6), B, "#fff", 1.3]],
  snapInt: [["M3 3l17 18M20 3L4 21", K, N, 1.1], [o(12, 12, 2.6), B, "#fff", 1.3]],
  snapTan: [["M2 6h20M3 19q2-12 9-13 7 1 9 13", K, N, 1.1]],
  snapTan2: [["M2 6h20M3 19q2-12 9-13 7 1 9 13", K, N, 1.1], [o(12, 6, 2.6), B, "#fff", 1.3]],
  snapPerp: [["M2 19h20M14 3v16M14 13h-4v6", K, N, 1.1]],
  snapPerp2: [["M2 19h20M14 3v16M14 13h-4v6", K, N, 1.1], [o(14, 19, 2.6), B, "#fff", 1.3]],
  snapPar: [["M4 17h18M12 9h10", "#aaa", N, 1.2], [box(3, 6, 6, 5), "#aaa", N, 1.2]],
  snapPt: [["M12 4v16M4 12h16", "#aaa", N, 1.1], [o(12, 12, 2), "#aaa", "#fff", 1.2]],
  snapOn: [["M2 20l7-5 5 2V3M13 20l8-16", "#aaa", N, 1.2]],
  snapMulti: snapBox,
  snapM2: [...snapBox, ["M16 16h8v8h-8z", N, "#eee"], ["M18 17v6M21 17v6", K, N, 1.5]],
  snapM3: [...snapBox, ["M15 16h9v8h-9z", N, "#eee"], ["M16 17v6M19 17v6M22 17v6", K, N, 1.5]],
  dimX: [["M4 5v17M20 5v17M4 8h16M4 6v4M20 6v4", R, N, 1.6], ["M4 20h16", K, N, 1.2]],
  dimA: [["M3 3l5-1q8 3 9 15", R, N, 1.6], ["M12 10l5 8 4-8M5 22h15", "#611", N, 1.5]],
  lock: [[box(4, 11, 16, 11), "#5a5010", "#b8a828"], ["M7 11V6q5-6 10 0v5", "#777", N, 2]],
  scroll: [["M6 4h13v4h-3v12H4v-4h3z", "#999", "#e8e8e8", 1.4], ["M9 8h5M9 12h4", "#999", N, 1]],
  house: [["M2 13L12 3l10 10h-3v8h-5v-6h-4v6H5v-8z", "#999", "#c8c8c8", 1.3]],
  tray: [[box(4, 3, 15, 18), "#888", "#ddd", 1.4], [o(12, 11, 4), "#888", "#bbb", 1.4]],
  funnel: [["M2 3h6l7 6h7v6h-7l-7 7H2l3-7V9z", B, "#e4f0ff", 1.5]],
  viewsStack: [[box(2, 2, 14, 10), "#448", "#fff", 1.3], [box(5, 6, 14, 10), "#448", "#fff", 1.3], [box(9, 10, 14, 10), "#448", "#eee", 1.3]],
  apply: [[box(2, 2, 19, 15), "#557", "#fff", 1.3], star(9, 8, 6, "#c8b020"), ["M11 8v14l4-4 3 6 3-2-3-5h5z", K, K]],
  pickLevel: [["M9 9l5-5h9l-5 5zM9 13l5-5h9l-5 5zM9 17l5-5h9l-5 5z", "#888", "#f8f8f8"], ["M2 5v15l4-4 3 6 3-2-3-5h5z", K, K]],
  hier: [["M5 2v20M5 4h16M5 11h5M5 19h5", K, N, 1.3, "2 1"], ["M10 9h12M10 14h12M10 20h12", "#543", N, 1.5], [o(5, 3, 2), N, K], [o(13, 9, 2), N, K], [o(13, 14, 2), N, K], [o(13, 20, 2), N, K]],
  handOver: [[box(1, 3, 22, 18), "#557", "#fff", 1.3], [box(1, 3, 22, 3), N, "#3a8ae0"], ["M4 18q2-7 8-7l6-1v6q-6 4-14 2z", "#654", "#e0b090"], [box(18, 8, 5, 8), N, "#2a8ae8"]],
};

function Icon({ n, cls = "size-6" }: { n: string; cls?: string }) {
  return (
    <svg viewBox="0 0 24 24" className={`${cls} shrink-0 overflow-visible`}>
      {icons[n].map((it, i) =>
        Array.isArray(it) ? (
          <path key={i} d={it[0]} stroke={it[1] ?? K} fill={it[2] ?? N} strokeWidth={it[3] ?? 1} strokeDasharray={it[4]} />
        ) : (
          <text key={i} x={it.x} y={it.y} fontSize={it.s} fill={it.c} fontWeight={700} fontFamily={it.f}>{it.t}</text>
        ),
      )}
    </svg>
  );
}

const Caret = ({ c = "#111", cls = "w-[9px] h-[5px]" }: { c?: string; cls?: string }) => (
  <svg viewBox="0 0 9 5" className={`${cls} shrink-0`}><path d="M0 0h9L4.500 5z" fill={c} /></svg>
);
const Sep = () => <div className="flex w-[6px] shrink-0 justify-center"><div className="h-7 w-px bg-[#9a9a9a]" /></div>;
const Grip = () => <div className="flex w-[7px] shrink-0 pl-[2px]"><div className="h-[22px] border-l-2 border-dotted border-[#9c9c9c]" /></div>;
const Slot = ({ n }: { n: string }) => <div className="flex w-[28.2px] shrink-0 items-center justify-center"><Icon n={n} cls="size-[22px]" /></div>;
const CaretSlot = () => <div className="flex w-[14.7px] shrink-0 items-center justify-center"><Caret /></div>;

/* "|" draws a separator and "v" a drop-down arrow */
function Tools({ list }: { list: string }) {
  return <>{list.split(" ").map((n, i) => (n === "|" ? <Sep key={i} /> : n === "v" ? <CaretSlot key={i} /> : <Slot key={i} n={n} />))}</>;
}
function Bar({ w, children }: { w: string; children: React.ReactNode }) {
  return (
    <div className={`${w} mr-[3px] flex h-[33px] shrink-0 items-center rounded-[4px] bg-linear-to-b from-[#fbfbfb] via-[#efefef] to-[#d6d6d6]`}>
      <Grip />
      {children}
    </div>
  );
}
const Letters = ({ w, s, children }: { w: string; s: string; children: React.ReactNode }) => (
  <div className={`${w} ${s} shrink-0 scale-y-120 text-center font-['Lato'] leading-none tracking-[-1px]`}>{children}</div>
);

/* ---------- left dock ---------- */
function PanelHead({ title, pins = 2 }: { title: string; pins?: number }) {
  return (
    <div className="mb-[2px] flex h-[20px] shrink-0 items-center bg-linear-to-r from-[#cfe0ee] via-[#bcd6ea] to-[#dfeaf2] pr-[3px] pl-[3px] text-[12px] text-[#55606c]">
      <span className="grow tracking-[-0.15px]">{title}</span>
      <Caret c="#444c56" />
      {pins > 1 && (
        <svg viewBox="0 0 12 12" className="ml-[6px] size-3"><path d="M3 1v6M6 1v6M9 3v5M2 7h8M4.500 7v4M6 3h4v6h-5" stroke="#444c56" fill="none" /></svg>
      )}
      <svg viewBox="0 0 12 12" className="ml-[4px] size-3"><path d="M4 1h4v6H4zM2 7h8M6 7v5" stroke="#444c56" fill="none" /></svg>
      <svg viewBox="0 0 12 12" className="ml-[4px] size-3"><path d="M1 1l10 10M11 1L1 11" stroke="#3a424c" strokeWidth="2" /></svg>
    </div>
  );
}

const taskRows: [string, string, string][] = [
  ["Q", "h-[56px]", "smartLine line multi point spline sketch wave bisect minDist angleLn"],
  ["W", "h-[29px]", "rect poly ortho regPoly"],
  ["E", "h-[57px]", "circle ellipse arc halfArc qArc modArc arc2 arc3"],
  ["R", "h-[57px]", "hatch crossHatch pattern linPat patQ patMove patEdit patDel"],
  ["T", "h-[29px]", "tags tagEdit tagQ tagChk tagDel"],
  ["A", "h-[57px]", "tA tNote tAB tABC tCC tABCq tAa tAi t1 tA1A tA1 tA2 tBox tLines"],
  ["", "h-[20px]", "cell cells cellUp cellO cellQ cellArr cellG"],
];
const mainTasks = ["pointer", "fence", "copyUp", "fit", "palette", "bulbStars", "scaleBox", "del", "measure"];

function LeftDock() {
  return (
    <div className="flex w-[276px] shrink-0 flex-col border-r-[6px] border-[#b0b0d8] bg-[#f0f0f0]">
      <div className="flex h-[436px] shrink-0 flex-col">
        <PanelHead title="Tasks" />
        <div className="mx-[5px] mt-[3px] flex h-[25px] shrink-0 items-center rounded-[3px] border border-[#444] bg-white pl-1">
          <Icon n="user" cls="size-4" />
          <span className="ml-[5px] grow font-['DejaVu_Sans'] text-[11.5px] text-[#111]">Tasks</span>
          <div className="flex h-full w-6 items-center justify-center border-l border-[#777]"><Caret cls="w-[7px] h-[4px]" /></div>
        </div>
        <div className="mx-1 mt-[5px] flex h-[35px] shrink-0 items-center rounded-[5px] bg-white pl-[3px]">
          {mainTasks.map((n, i) => (
            <div key={n} className={`relative flex h-[28px] w-[28.4px] shrink-0 items-center justify-center ${i === 3 ? "border-2 border-[#3a5a98] bg-[#f6c88a]" : ""}`}>
              <Icon n={n} cls="size-[21px]" />
              <span className="absolute bottom-0 left-0 border-r border-b border-[#888] pr-[3px] font-['Liberation_Sans'] text-[12.5px] leading-[12px] text-[#777]">{i + 1}</span>
              {i > 0 && <svg viewBox="0 0 3 5" className="absolute right-[-1px] bottom-[2px] h-[5px] w-[3px]"><path d="M0 0l3 2.500-3 2.500z" /></svg>}
            </div>
          ))}
        </div>
        <div className="mt-[4px] flex min-h-0 grow pb-[4px]">
          <div className="ml-1 flex w-[244px] flex-col overflow-hidden rounded-t-[5px] bg-white">
            <div className="flex h-[24px] shrink-0 items-center bg-linear-to-b from-[#f6fcff] via-[#d8f0fc] to-[#b4e0f8] pr-[7px] pl-[4px]">
              <Icon n="smartLine" cls="size-4" />
              <span className="ml-[6px] grow font-['DejaVu_Sans'] text-[11.5px] font-bold tracking-[-0.2px] text-[#111]">Drawing</span>
              <svg viewBox="0 0 68 14" className="h-[14px] w-[68px]">
                <path d="M1 1h5v5H1zM8 1h5v5H8zM1 8h5v5H1zM8 8h5v5H8zM19 1h12v2H19zM19 6h12v2H19zM19 11h12v2H19z" fill="#333" />
                <path d="M35.500 -1h15v16h-15z" fill="#f8f8f8" stroke="#999" />
                <path d="M37 1h12v5H37zM37 8h12v5H37z" fill="#333" /><path d="M57 10l4-5 5 5" fill="none" stroke="#333" strokeWidth="3" />
              </svg>
            </div>
            <div className="mt-[3px] flex flex-col">
              {taskRows.map(([k, h, list]) => (
                <div key={k} className={`flex ${h} mb-px shrink-0 ${k ? "" : "overflow-hidden"}`}>
                  <div className="ml-1 flex w-[16px] shrink-0 items-center justify-center bg-linear-to-r from-[#e4e0ee] to-[#cfccd8] font-['Liberation_Sans'] text-[13px] text-[#888]">{k}</div>
                  <div className="flex w-[220px] flex-wrap content-start border-b border-[#999] pt-px">
                    {list.split(" ").map((n) => <div key={n} className="flex h-[28px] w-[28.2px] items-center justify-center"><Icon n={n} cls="size-[21px]" /></div>)}
                  </div>
                </div>
              ))}
            </div>
          </div>
          <div className="ml-[4px] flex w-[15px] flex-col items-center bg-[#f0f0f0]">
            <svg viewBox="0 0 8 5" className="mt-[7px] mb-[7px] h-1 w-[7px] shrink-0"><path d="M0 5h8L4 0z" /></svg>
            <div className="flex h-[152px] w-[14px] shrink-0 flex-col items-center justify-center gap-[2px] rounded-[2px] border border-[#999] bg-linear-to-r from-[#f6f6f6] to-[#cfcfcf]">
              <div className="h-px w-[7px] bg-[#555]" /><div className="h-px w-[7px] bg-[#555]" /><div className="h-px w-[7px] bg-[#555]" />
            </div>
            <div className="grow" />
            <Caret cls="w-[7px] h-[4px] mb-[9px]" />
          </div>
        </div>
      </div>
      <div className="h-[6px] shrink-0 bg-[#b0b0d8]" />
      <PanelHead title="Fit View" />
      <div className="mt-[4px] flex items-center pl-[32px] font-['Liberation_Sans'] text-[12px] tracking-[-0.35px]">
        <span><u>F</u>iles:</span>
        <div className="ml-[6px] flex h-[15px] w-[102px] items-center justify-between rounded-[3px] border border-[#777] bg-linear-to-b from-[#f4f4f4] to-[#dcdcdc] pr-[5px] pl-[3px]">All <Caret cls="w-[8px] h-[5px]" /></div>
      </div>
      <div className="flex items-center pl-[26px] font-['Liberation_Sans'] text-[12px] tracking-[-0.75px]">
        <div className="flex size-[13px] items-center justify-center border border-[#888] bg-[#eee]"><svg viewBox="0 0 10 10" className="size-[9px]"><path d="M1 4l3 4 5-7" fill="none" stroke="#3a4a80" strokeWidth="2" /></svg></div>
        <span className="ml-[5px]"><u>E</u>xpand Clipping Planes</span>
      </div>
    </div>
  );
}

/* ---------- legend table on the drawing canvas (three units per pixel) ---------- */
type Row = { n: string; s?: string; h?: number; c?: string };
const legend: Row[] = [
  { n: "PCRS_ABRI_BUS", s: "x" }, { n: "PCRS_BATI", s: "l" }, { n: "PCRS_PROEMINENCE_BATI" }, { n: "PCRS_ESCALIER" }, { n: "PCRS_BORDURE_FE" }, { n: "PCRS_BORDURETTE" },
  { n: "PCRS_CHAUSSEE" }, { n: "PCRS_CHEMIN" }, { n: "PCRS_NATURE_SOL" }, { n: "PCRS_CANIVEAU_AXE" }, { n: "PCRS_GLISSIERE_SECURITE" }, { n: "PCRS_PERRON", s: "b" },
  { n: "PCRS_PONT" }, { n: "PCRS_CLOTURE" }, { n: "PCRS_MUR" }, { n: "PCRS_MUR_BAHUT" }, { n: "PCRS_MUR_ENROCHEMENT" }, { n: "PCRS_MUR_PARAPET" },
  { n: "PCRS_MUR_SOUTENEMENT" }, { n: "PCRS_PORTAIL", s: "xxb" }, { n: "PCRS_SEUIL", s: "x" }, { n: "PCRS_TALUS_HAUT_BAS" }, { n: "PCRS_TALUS_HAUT" },
  { n: "PCRS_ARBRE", s: "tree", h: 2 }, { n: "PCRS_ARBRE_ENTOURAGE" }, { n: "PCRS_BAC_FLEURS" }, { n: "PCRS_ESPACE_VERT", s: "b" }, { n: "PCRS_HAIE" },
  { n: "PCRS_LAMPADAIRE", s: "4", h: 2 }, { n: "PCRS_BORNE_FONTAINE", s: "." }, { n: "PCRS_ARMOIRE", s: "2" }, { n: "PCRS_MOBILIER", s: "4", h: 2 }, { n: "PCRS_AVALOIR", s: "x" },
  { n: "PCRS_GRILLE_CANIVEAU", s: "2" }, { n: "PCRS_PLAQUE", s: "6", h: 3 }, { n: "PCRS_BOUCHE_A_CLE", s: "2" }, { n: "PCRS_LAMPADAIRE", s: "x" }, { n: "PCRS_POTEAU", s: "4", h: 2 },
  { n: "PCRS_SIGNA_V", s: "12", h: 4 }, { n: "PCRS_FEU_TRICOLORE", s: "x" }, { n: "PCRS_BARRIERE", s: "x" }, { n: "PCRS_NATURE_BATI", s: "x", c: "#18a870" }, { n: "PCRS_BORNE_LUMINEUSE", s: "x" },
  { n: "PCRS_BOUCHE_ARROSAGE", s: "x" }, { n: "PCRS_PANNEAUX", s: "." }, { n: "PCRS_BORNE_VENTILATION", s: "x" }, { n: "PCRS_DIVERS_LIGNE" }, { n: "PCRS_DIVERS_POINT", s: "2" },
  { n: "PCRS_DIVERS_SURFACE", s: "4", h: 2 }, { n: "PCRS_PYLONE", s: "x" }, { n: "PCRS_QUAI_FLUVIAL" }, { n: "PCRS_SIGNAL" }, { n: "PCRS_POINT_LEVE", s: "x" }, { n: "PCRS_RAMPE" },
  { n: "PCRS_HYDRO" }, { n: "PCRS_RESEAU_LIGNE" }, { n: "PCRS_RESEAU_POINT", s: "." }, { n: "PCRS_RESEAU_SURFACE", s: "b" }, { n: "PCRS_TEXTE", s: "-t" }, { n: "PCRS_TYPE", s: "2" },
  { n: "PCRS_SERRE" }, { n: "TXT_ALT", s: "" },
];
const P = 26.24;
const top0 = 65;
const starts = legend.reduce<number[]>((a, r, i) => [...a, a[i] + (r.h ?? 1)], [0]);
const y = (k: number) => top0 + P * k;
const X = (cx: number, cy: number, w = 4) => `M${cx - w} ${cy - 5}l${2 * w} 10M${cx + w} ${cy - 5}l${-2 * w} 10M${cx - w} ${cy - 5}v10M${cx + w} ${cy - 5}v10`;

const P1 = "#c46a6a", YL = "#cf9f20", WT = "#d4d4d4", GN = "#12b012", RD = "#b41010", BL = "#1818d0", SK = "#68a0c0";
/* x, row, size, width, colour, text */
const notes: [number, number, number, number, string, string][] = [
  [342, 0, 25, 362, P1, "cell- bus shelter- stretch 3 point"], [341, 1, 20, 128, YL, "Building limits"], [478, 1, 20, 45, WT, "lines"], [590, 1, 20, 320, WT, "cell in case large cabinet-stretched"],
  [341, 2, 11, 238, YL, "lines : out balconies, bay-windows, beams..."], [341, 3, 22, 62, "#b010c8", "stairs"], [431, 3, 22, 55, "#b010c8", "lines"],
  [341, 4, 20, 253, YL, "limit of curb -edge road-line"], [341, 5, 20, 145, YL, "Secondary curb"], [341, 6, 25, 463, YL, "road edge in case payment without curb"],
  [341, 7, 25, 518, YL, "Path, vehicle track, limit of unpaved roadway"], [341, 8, 10, 76, RD, "change floor"], [341, 9, 26, 148, YL, "gutter center"],
  [341, 10, 11, 78, YL, "security barrier"], [341, 11, 11, 50, WT, "steps"], [436, 11, 10, 30, RD, "fixed"], [341, 13, 25, 253, WT, "fence ( metal-wood...)"],
  [341, 14, 11, 40, RD, "wall line"], [341, 15, 11, 70, RD, "wall with fence"], [341, 16, 11, 26, RD, "rocks"], [341, 17, 11, 64, RD, "wall parapet"], [341, 18, 11, 94, RD, "wall - retaining"],
  [342, 19, 11, 86, RD, "rectangular gate"], [444, 19, 11, 36, WT, "stretch"], [528, 19, 11, 52, RD, "sliding gate"], [602, 19, 11, 32, WT, "stretch"], [762, 19, 11, 48, RD, "surface"],
  [341, 20, 11, 64, WT, "cell- fixed scale"], [458, 20, 11, 68, WT, "threshold stretch"], [341, 21, 11, 150, "#9ab070", "bottom line, upper line..."], [341, 22, 11, 120, "#9ab070", "talus line - top edge"],
  [408, 23.5, 26, 316, P1, "cell- tree fixed scale (1-1-1)"], [341, 25, 26, 140, RD, "limit  of tree"], [341, 26, 19, 145, WT, "lines -flower pot"], [341, 27, 25, 136, GN, "Green zone"], [341, 28, 25, 76, GN, "Hedge"],
  [344, 29, 11, 42, P1, "lamp"], [458, 29, 20, 132, WT, "stretch 3 point"], [676, 29, 11, 108, P1, "limit cabinet base"], [344, 30, 10, 74, P1, "one candelabra"], [458, 30, 24, 122, WT, "fixed scale"],
  [654, 30, 20, 20, BL, "34"], [341, 31, 21, 224, P1, "Fire hydrant- fixed scale"], [509, 33.5, 24, 164, WT, "stretch 3 point"], [316, 35, 25, 438, P1, "cell- catch in curb- stretch 3 or 2 point"],
  [344, 36, 11, 128, P1, "square inlet grating 2p"], [500, 36, 11, 68, WT, "stretch 3 p."], [666, 36, 11, 30, P1, "round"], [742, 36, 11, 54, WT, "fixed scale"],
  [350, 37, 11, 216, WT, "Square Telecom plate- stretch 3 point"], [666, 37, 11, 210, WT, "Square Telecom plate- fixed plate"], [350, 38, 11, 216, WT, "Square Telecom plate- stretch 3 point"], [350, 39, 11, 216, WT, "Square Telecom plate- stretch 3 point"],
  [668, 39, 11, 46, BL, "manhole"], [762, 38.2, 49, 154, WT, "stretch"], [341, 40, 25, 132, P1, "water valve"], [486, 40, 10, 134, RD, "rectangular-or-round"], [656, 40, 25, 110, P1, "gas valve"], [806, 40, 23, 124, WT, "fixed scale"],
  [341, 41, 11, 22, P1, "lamp"], [479, 41, 24, 124, WT, "fixed scale"], [341, 42, 11, 42, P1, "target"], [336, 42.5, 11, 86, P1, "B.wooden.b.iron"], [341, 43, 11, 30, P1, "stop"], [654, 42, 11, 36, P1, "telecom"], [654, 43, 11, 36, P1, "electric"], [731, 42.4, 42, 196, WT, "fixed scale"],
  [341, 48, 11, 128, P1, "Traffic light - pedestrian light"], [341, 50, 11, 54, P1, "signboard"], [461, 50, 20, 132, WT, "stretch 3 point"], [341, 51, 21, 350, P1, "small ligh-lamp on ground- fixed scale"],
  [341, 53, 11, 96, BL, "panel - fixed scale"], [341, 54, 11, 250, P1, "ventilation / aeration manhole or basement outlet"], [634, 54, 20, 150, WT, "stretch 2-3 point"], [341, 55, 11, 342, SK, "linear element (pipe, road, pole, barrier, bumping, wall, rail)"],
  [341, 56, 11, 112, SK, "v.d. 1. fixed scale point"], [485, 56, 24, 124, WT, "fixed scale"], [656, 56, 11, 30, SK, "stretch"], [341, 57, 11, 34, SK, "Box..."], [404, 57, 11, 54, WT, "stretch 2p"], [656, 57, 11, 52, BL, "transformer"], [746, 57, 11, 30, WT, "3 p"],
  [341, 58, 11, 74, BL, "concrete slab"], [434, 58, 11, 30, WT, "stretch"], [674, 58, 11, 28, SK, "shape"], [341, 59, 11, 60, P1, "Energy pylon"], [434, 59, 11, 32, WT, "1 to 3"], [341, 60, 11, 78, "#78a898", "quay - river line"], [341, 61, 11, 100, WT, "only pylons lines"],
  [341, 62, 11, 30, WT, "point"], [341, 64, 11, 210, "#18c8a0", "axe / water course / hydrographic line"], [341, 65, 22, 835, WT, "Linear representation of an element that does not have a particular layer"],
  [341, 66, 22, 822, WT, "Point representation of an element that does not have a particular layer"], [1170, 66, 22, 122, "#780808", "fixed scale"], [341, 67, 22, 853, WT, "Surface representation of an element that does not have a particular layer"],
  [350, 70, 10, 20, WT, "line"],
];

function symbols(s: string, k: number, h: number) {
  const m = y(k + 0.5);
  const cols = s === "12" ? 3 : 2;
  let d = "";
  if (s === "-") d = `M64 ${m}h38`;
  if (s === "x") d = X(83, m);
  if (s === "l") d = `M38 ${m}h44V${y(k)}${X(104, m)}`;
  if (s === "b") d = `M64 ${m - 5}h38v10h-38z`;
  if (s === ".") d = `M82 ${m}h3`;
  if (s === "xxb") d = `M66 ${y(k)}v${P}M98 ${y(k)}v${P}M100 ${m - 6}h25v12h-25z${X(53, m)}${X(82, m)}`;
  if (s === "tree") d = `M66 ${y(k)}v${P}M98 ${y(k)}v${P}M82 ${y(k + 1)}v${P}M38 ${y(k + 1)}h90${o(53, m, 9)}M48 ${m}h10M53 ${m - 5}v10${X(82, m)}M110 ${m}h6M48 ${m + P}h22M50 ${m + 17}l18 18M68 ${m + 17}l-18 18M59 ${m + 14}v24${X(104, m + P)}`;
  if (/^\d+$/.test(s)) {
    for (let r = 0; r < h; r++) {
      const n = r < 3 ? cols : 2;
      for (let c = 0; c < n; c++) d += X(38 + (90 / n) * (c + 0.5), y(k + r + 0.5)) + (c ? `M${38 + (90 / n) * c} ${y(k + r)}v${P}` : "");
      if (r) d += `M38 ${y(k + r)}h90`;
    }
  }
  return d;
}
const marks: [number, number][] = [[324, 0], [580, 1], [324, 19], [510, 19], [324, 29], [322, 30], [638, 30], [330, 36], [643, 36], [330, 37], [643, 37], [330, 38], [643, 38], [330, 39], [324, 40], [638, 40], [324, 41], [322, 42], [322, 43], [638, 42], [638, 43],
  [324, 44.4], [480, 44.4], [638, 44.4], [818, 44.4], [324, 45.4], [480, 45.4], [638, 45.4], [324, 46.4], [480, 46.4], [638, 46.4], [818, 46.4], [324, 48], [324, 49], [324, 50], [324, 54], [638, 56], [324, 57], [638, 57], [324, 58], [324, 62], [341, 33], [408, 33], [341, 34], [408, 34]];

function Legend() {
  return (
    <g transform="translate(290 190) scale(.33333)" fontFamily="Liberation Sans">
      <path d="M38 38h269v25H38zM128 38v25" stroke="#e0e0e0" strokeWidth="7" fill="none" />
      <g stroke="#dfe4df" strokeWidth="3" fill="none" shapeRendering="crispEdges">
        <path d={`M38 ${y(0)}h900V${y(65)}M938 ${y(68)}V${y(72)}H38V${y(0)}M128 ${y(0)}V${y(72)}M308 ${y(0)}V${y(72)}`} />
        <path d={starts.slice(1, -1).map((k) => `M38 ${y(k)}H938`).join("")} />
        <path d={`M308 ${y(24)}h90M398 ${y(23)}v${2 * P}M338 ${y(23)}v${P}M368 ${y(23)}v${P}M353 ${y(24)}v${P}M308 ${y(30)}H938M308 ${y(58)}H938M308 ${y(34)}h135M443 ${y(33)}v${2 * P}M373 ${y(33)}v${2 * P}M622 ${y(36)}v${P}M938 ${y(65)}h267v${P}M938 ${y(66)}h357v${P}H938M1205 ${y(67)}v${P}H938`} />
        <path d={`M724 ${y(19.3)}h25v11h-25zM618 ${y(29.5)}h42M620 ${y(58.3)}h40v10h-40z`} />
      </g>
      <path d={legend.map((r, i) => symbols(r.s ?? "-", starts[i], r.h ?? 1)).join("")} stroke="#f0f0f0" strokeWidth="2.6" fill="none" />
      <path d={marks.map(([a, k]) => X(a, y(k + 0.5))).join("") + o(320, y(23.5), 8) + X(352, y(23.5)) + X(376, y(24.5)) + `M315 ${y(24.2)}h24M317 ${y(24.1)}l20 20M337 ${y(24.1)}l-20 20M322 ${y(66.5)}h3M322 ${y(31.5)}h3`} stroke="#f4f4f4" strokeWidth="2.6" fill="none" />
      <path d={X(347, y(49.5), 6)} stroke="#e06060" strokeWidth="3" />
      <g fontSize="10" fill="#a8a8a8">
        <text x="52" y="55" textLength="56">Symbology</text><text x="200" y="55" textLength="34">Calque</text>
        {legend.map((r, i) => <text key={i} x="137" y={y(starts[i] + (r.h ?? 1) / 2) + 4} fill={r.c} textLength={Math.min(150, r.n.length * 6.9)} lengthAdjust="spacingAndGlyphs">{r.n}</text>)}
        <text x="54" y={y(68.5) + 4} textLength="56">Text items</text>
        {[0, 1, 2].map((r) => [345, 500, 655].map((a, c) => <g key={`${r}${c}`}><text x={a} y={y(44.9 + r) + 4} fill={P1} textLength="46">{["panel", "target", "bollard"][r]}</text><text x={a + 74} y={y(44.9 + r) + 4} textLength="24">fixed</text></g>))}
        <text x="838" y={y(44.9) + 4}>fixed</text><text x="838" y={y(46.9) + 4}>fixed</text>
      </g>
      {notes.map(([a, k, s, w, col, t], i) => <text key={i} x={a} y={y(k + 0.5) + s * 0.36} fontSize={s} fill={col} textLength={w} lengthAdjust="spacingAndGlyphs">{t}</text>)}
    </g>
  );
}

/* ---------- site plan (three units per pixel) ---------- */
const Tree = ({ at }: { at: number[] }) => (
  <path d={Array.from({ length: at.length / 2 }, (_, i) => { const a = at[2 * i], b = at[2 * i + 1]; return `M${a - 7} ${b - 15}h14l2 7h6v15h-6l-2 7h-14l-2-7h-6v-15h6zM${a - 2} ${b - 5}v9l6-4z`; }).join("")} stroke="#148a14" strokeWidth="3" fill="none" />
);
const Bow = ({ at, c }: { at: number[]; c: string }) => (
  <path d={Array.from({ length: at.length / 2 }, (_, i) => { const a = at[2 * i], b = at[2 * i + 1]; return `M${a - 6} ${b + 5}v-9l10 10v-12M${a - 6} ${b + 4}l10-8`; }).join("")} stroke={c} strokeWidth="3" fill="none" />
);

function SitePlan() {
  return (
    <g fill="none" strokeWidth="3.3" shapeRendering="crispEdges">
      <g transform="translate(840 350) scale(.33333)">
        <g stroke="#fff" strokeWidth="4.5">
          <path d="M692 118L612 262Q590 300 590 340Q592 410 625 440Q640 456 665 470L925 615Q952 640 938 680L860 830Q840 865 790 905L690 985Q655 1014 620 1014Q590 1010 560 990L440 915Q385 884 330 884Q285 888 245 915Q222 940 205 970L122 1130" />
          <path d="M750 143L665 305Q650 330 652 355Q658 388 700 408L1350 778" />
          <path d="M1350 858L1065 694Q1020 678 1000 710L912 872L850 935L745 1030L690 1065Q640 1088 590 1078L530 1048L375 960Q340 945 305 958Q282 970 272 990L180 1163" />
        </g>
        <path stroke="#fff" d="M600 78L688 122M492 178L622 248M565 196L628 232M618 172L654 188M495 331l94 8M498 360l40-12 54-8M515 402l20-12 30-4 28-10M500 408l12 56 20 34 30 8M578 476l8 10 22-10 20 15 18-34M640 545l26-66 16 4-38 84M718 560l25-46M775 545l-45 98M815 555l-18 40M858 768l-28 58-42 48-86 64-40-22M150 858l28 16 8-8 54 40M108 962l82 44M75 1075l56 28M155 1055l-45-16M300 812l22 66 34 6 10-64M312 814l16 66M300 812l66 0M420 832l-14 60M492 860l-48 58M545 862l-30 50-6 46M590 935l-24 42-20 4M478 722l-50 84M735 430l22-50 4-12 12 4-22 52M742 424l22-52M780 448l30-66 24-50 22 14-20 56M825 470l14-14 30 0M910 486l-4 34M958 470l-38 62M1010 520l-30 0-22 36M1078 545l-36 62M1150 575l-40 6-22 30 0 16M1165 628l-4 36M1196 625l-24 44M1240 660l-24 28-2 10M1342 690l-38 56M1165 755l-30 60-4 36M1188 772l-52 70M712 342l14 8-8 18-22 12M735 320l-20 18M675 285l-4 22M448 1015l-26 110 12 16M490 1030l-30 60M470 1000l-4 20M532 1060l6 46-14 18M606 1080l-22 50-6 60M634 1088l-2 26 16 12 14-40M668 1078l4 70M700 1040l6 30 26 34 8 34M742 1035l18 18 20-6 14 10M808 968l40 30-2 28M848 938l24 16 24-2 0 14 38-24 24 0M1316 870l-40 0-14 30M126 1010l18 8 12 20M284 980l0 22M912 892l4-20" />
        <path stroke="#e0a020" d="M526 70l88 32-2 20M482 194l48 14-8 46-4 24-2 30-12 14M444 371l56-14 14 44M540 504l-26 60M552 508l64 26 20 6-38 64M630 542l-30 62M650 568l42 10 46 16 2 42M782 618l-46 76M780 618l34 6 6 26 36 32-36 62 36 24M718 262l22-8 24 16-28 54 24 18 44 26 8-6 14-38 26 14-8 20 32 50 72 36 42-74M994 394l-42 74 10 14 62 8 20 10 38-52M1098 508l-20 36 40 20 56 12 22-38M1252 540l-44 76 44 22 48 6 14-16 14-38M1340 658l-36 62M260 740l24 56-38 28-40 30 28 18M326 742l-8 62 24 2 34-6 42 2 0-96M420 804l60 48 20 14 28-8 18-42 36 14-14 42 12 36 56 22 38-68M152 876l24 14-20 38-28 38-40-4-8 34-4 60-48-26M302 1082l16-34 36-14 70 32-20 50 34 22 28-64 56 36 38 16-8 32M596 1194l-4-42 40-2 4 18 64-8 26 26 4 32M746 1108l44 60M746 1108l40-28 30-2 20-4 36 56M860 1022l72 68M858 1024l36-38 26 0 34-30 20 26M1026 798l16-30 40 12 48 26-14 30M1244 900l-42 70M1290 905l-18 44M1350 1000l-16 28M610 110l-10 30" />
        <path stroke="#e020e0" d="M550 55l44 22 12-10M598 80l-6 16M530 145l50 22-16 28M498 214l22 6M490 236l26 6M497 268l14 6M470 374l24 2M484 398l18 2M606 562l12-22M704 622l20-34M776 668l24-42M812 674l10-18M776 218l-28 50M806 338l-14 24M862 366l-16 30M996 438l-24 42M1010 484l8-14M1124 510l-20 44M1082 545l54 26M1246 590l-12 26M274 764l48 0M346 760l-8 46M238 792l12 20M470 834l14 24M496 846l-14 20M566 884l14 30M594 894l-18 20 24 4M108 928l38 24M86 962l30-4M40 1022l42 24M360 1060l10 18M402 1066l-20 36M484 1108l-18 40M420 1100l-12 20M612 1156l4 34M670 1168l2 24M764 1098l30 32M812 1090l32-4M876 996l34 36M906 980l28 26M1150 876l16-50 14 6M1308 908l-16 50M1330 918l-12 36" />
        <path stroke="#2090c0" d="M612 108q18-10 22 12l0 14M516 262l24 14-20 24-10 22M540 496l14-16 34 12 8 18M650 560l22-8 32 8 16 4M858 424l16 8 2 26 42 4 20-14M984 514l16-24 18 2M750 358l20-10 8 14-14 12zM1236 640l-4 16 18 10 10-20M322 1030q0-30 22-26 40 12 48 22l-4 10M354 820l14 14 12-20M570 924l20 12M164 940l14-8 18 14M780 1056l20 20 16-14M786 1050l28 4M1346 905l-14 22 8 18M100 1012l18 10-6 12" />
        <path stroke="#148a14" d="M766 152l-56 92 10 14 10 6M1084 448l-36 56M968 780l-52 112 12 12 54 36M968 780l56 16M1020 792l-44-14M272 1030l-76 136M272 1030l42 20M974 430l-20 40M895 440l20 6" />
        <Tree at={[695, 324, 538, 436, 712, 368, 856, 476, 904, 488, 1026, 568, 874, 650, 886, 697, 1046, 719, 1009, 741, 394, 874, 212, 920, 152, 1039, 598, 968, 614, 984, 466, 1052, 902, 921, 827, 1042, 696, 1111, 568, 1190, 1307, 718, 1285, 860]} />
        <Bow at={[586, 526, 692, 586, 840, 762, 1134, 562, 1260, 628, 450, 818, 562, 816, 660, 910, 490, 852, 154, 928, 96, 966, 438, 1138, 406, 1118, 518, 1134, 506, 272]} c="#e020b0" />
        <Bow at={[612, 400, 626, 398, 1008, 626, 1024, 617, 866, 884, 878, 886, 297, 916, 302, 928, 656, 1054, 656, 1066]} c="#2090c0" />
        <Bow at={[806, 548, 764, 924, 800, 970, 152, 1078, 208, 1106, 834, 492, 908, 442, 968, 434, 204, 874, 468, 1088, 744, 366]} c="#148a14" />
        <g fill="#fff"><path d="M524 266l14 6-4 18-12-4zM504 404l14 6 2 20-10-4zM690 562l16 8-6 10-14-6zM584 510l18 6-8 10-14-6zM876 438l16 6-4 10-14-8zM994 494l22 2-6 8-18-4zM1124 562l18 10-10 8-12-8zM1232 630l30 14-6 14-26-12zM758 344l18 6-6 12-14-8zM478 858l16 6-8 10-14-6zM246 816l24 12-4 16-20-10zM366 800l16 6-8 12-12-4zM96 1006l14 6-8 14-10-6zM370 1030l20 6-8 10-16-6zM660 1144l16 2 2 20-20-2zM798 1080l24-18-4 20-12 8zM720 143h6v6h-6zM626 360h6v6h-6zM968 662h6v6h-6zM1056 660h4v6h-4zM498 968h6v6h-6zM1312 812h6v6h-6zM1016 690h10v12h-10zM926 618h6v12h-6z" /></g>
        <path stroke="#fff" d="M1066 772l16-6 6 20-14 14zM908 870v18h6v-16" />
        <path stroke="#d40000" strokeWidth="22" strokeLinejoin="round" d="M602 122l24 18-24 34-26-18z" fill="#d40000" />
        <path fill="#d40000" d="M810 608h52v34h-52l-6-12v-14z" />
        <path stroke="#2090c0" d="M820 640q4-16 16-14t12 16M618 108q12-2 14 16" /><path fill="#111" d="M594 144l12-6 4 12-8 14-10-4z" stroke="#2090c0" />
        <path stroke="#cfa018" d="M608 108l2 22-10 14" /><path stroke="#e000c0" d="M590 138l10 8-6 12" />
        <path stroke="#d40000" strokeWidth="20" d="M1208 804l60 32-38 68-60-34z" />
        <path stroke="#2090c0" d="M1196 832q22-8 30 14t8 14l-8 12-12-6" /><path stroke="#cfa018" d="M1194 858l18 12 12-4" /><Bow at={[1218, 884]} c="#e020b0" /><path stroke="#fff" d="M1212 816v10M1216 868l14 6" />
      </g>
      <g transform="translate(1240 520) scale(.33333)">
        <g stroke="#fff" strokeWidth="4.5">
          <path d="M0 187L350 380L395 408L500 492L570 575L780 830Q800 848 825 846Q850 842 880 810L1006 702" />
          <path d="M0 262L200 378L350 458Q390 480 440 540L540 650L728 872Q752 902 730 940L565 1076" />
          <path d="M1052 754L612 1126" />
        </g>
        <path stroke="#fff" d="M154 142l-50 100M182 208l-32 30-12 24M265 208l-60 96M218 266l0 36M265 260l-32 54M310 290l-34 30 0 18M408 282l-20 26-10 26-26 48M424 368l-22 20-8 20M490 436l-20 26M466 418l6 20M565 470l-10-16-34 4-22 34M600 534l-28 40M650 580l-34 8-18 22M165 362l-14 40M242 402l-22 30-30 60M282 424l-30 58M120 338l-40 24-14 34M398 505l-30 4-44 52M440 540l-16 12 6 30-20 26M500 605l-76 70M540 652l-50 44M470 826l110-92 80 94-32 28M870 652l78 92M832 758l38 6 18 8 14 16M1040 768l46 62 32-26M948 846l20 20 62 50 24-30M915 868l44 50M860 920l30 34 34 38 20-12M816 952l14 20 0 50 18 4M756 1008l84 92M724 1034l16 22M584 962l48 56M650 925l-8 30 26 30M668 1080v-16l10-6M874 912l-2-20 10-8M20 180l6-24 14-8" />
        <path stroke="#e0a020" d="M52 30L8 106l50 22 42 4 10-14 0-6 18-30M132 180l24-40M138 182l40 18 38 10 14-2 46-88M290 210l-26 44 50 12 34 6 30-56M416 280l-26 40 50 24 40 16 38-40M576 348l-46 38 30 36-6 26 26 38 24 18 58-56M700 500l-18-22M668 500l-38 40 36 38 34 24 34-32M66 440l28-48 40 22 14 26 18 18-34 62M188 490l26-32 44 24-2 22 18 20-12 26M322 592l34-36 44 42 14 28-20 42M396 712l64-54 32 34-20 22 40 40-48 44M836 644l52 68-26 24-44 30-54-62zM612 842l44 50-2 20-40 24-30 24-24-34M1056 886l-28 34M1058 884l-20-26M1026 922l-30-32-26 16-10 30 14 16M950 990l-14-24M934 992l-34-24-30 20-16 32-26 36 24 26-10 16-32-32-32 24-26-2-30 34 24 40-22 26-36-30-26 20M38 375L0 460" />
        <path stroke="#e020e0" d="M44 80l-16 30M60 110l-8 14M178 148l-18 44M140 180l34 20M202 172l-12 30M306 222l-22 40M322 240l-14 24M444 292l-26 42M456 336l-8 14M584 372l-38 30-14-20M546 404l12 14M672 528l-26 24M680 562l-12 12M112 404l-22 46M88 394l44 22-8 36M144 426l-6 24M230 470l-20 40M214 464l22 10M356 560l50 38M374 572l-34 38M394 606l-16 16M472 678l-34 34M478 716l-18 20M834 680l34 38M572 908l30 36M606 896l26 26M1104 820l30 36M1060 812l24 24M980 906l26 40M962 936l12 20M884 984l30 38M852 1036l16 12M792 1084l34 38M752 1090l32 28" />
        <path stroke="#2090c0" d="M32 140l-4 12 16 6 14-12M168 208l6 12 16 0 6-14M420 350l4 24 30 4 26-10M555 465l6 20 16-4M650 575l4 14 20-4M135 404l16-6-2 30-16-4zM252 480l18-14 4 22-14 8zM620 930l20 24 8-28M1048 792l-14 14 22 20-26 26M936 906l-6 20 12 14M742 1060q-14 14-4 22 18 14 20-10" />
        <path stroke="#148a14" d="M350 272l38 22M520 378l-46 70M512 378l-46 72M650 472l-88 76M656 480l-86 78M718 602l0 14-50 44 106 132 36-30M700 604l16 14" />
        <Tree at={[106, 208, 199, 262, 331, 325, 457, 415, 193, 417, 335, 487, 559, 526, 655, 638, 820, 782, 1002, 838, 1024, 874, 904, 946, 825, 982, 574, 996, 649, 1126]} />
        <Bow at={[60, 116, 322, 248, 452, 342, 588, 456, 674, 492, 678, 566, 838, 738, 794, 774, 938, 1004, 840, 1100, 724, 1194]} c="#e020b0" />
        <Bow at={[440, 456, 442, 466, 814, 900, 812, 914]} c="#2090c0" />
        <Bow at={[504, 606, 734, 874, 730, 940, 830, 936, 782, 832, 848, 838, 556, 564]} c="#148a14" />
        <g fill="#fff"><path d="M36 122l28 12-4 12-26-12zM178 196l20 8-6 10-18-8zM434 344l22 10-4 10-22-10zM570 456l14 14-10 10-12-14zM660 564l12 12-8 10-14-12zM132 420l12 8-8 10-12-6zM248 488l12 4-6 12-12-4zM394 596l14 8-4 8-12-8zM620 912l12 8-6 10-10-8zM1064 812l10 8-10 10-8-8zM948 926l12 8-6 10-10-8zM838 1016l14 6-8 12-12-8zM742 1072l14 4-4 12-14-6zM832 824h7v20h-7zM112 302h5v6h-5zM724 876h5v14h-5zM782 974h4v14h-4zM788 974h3v10h-3zM958 804h6v4h-6z" /></g>
        <path stroke="#fff" d="M300 268l20-6-4 20-14 14-6-12z" />
      </g>
    </g>
  );
}

function ViewWindow() {
  const btn = "flex h-[15px] items-center justify-center rounded-[2px] border border-[#52677e]";
  return (
    <div className="flex grow flex-col bg-black">
      <div className="flex h-[30px] shrink-0 items-center border-t-2 border-[#55657a] bg-linear-to-r from-[#9db8d6] via-[#97b2d2] to-[#9cb8d8] pt-[4px] pr-[2px] pl-[3px] text-[12px] text-[#111]">
        <div className="flex size-[13px] items-center bg-[#cfe4ff]"><Icon n="book" cls="size-[13px]" /></div>
        <span className="ml-[10px] grow text-[12px] tracking-[-0.25px]">View 1 - Top, Model</span>
        <div className={`${btn} w-[30px] bg-[#b8cce2]`}><div className="mt-1 h-[3px] w-[11px] border border-[#445] bg-white" /></div>
        <div className={`${btn} ml-[3px] w-[30px] bg-[#b8cce2]`}><svg viewBox="0 0 12 10" className="h-[10px] w-3"><path d="M4 1h7v5H4zM1 4h7v5H1z" stroke="#445" fill="#fff" /></svg></div>
        <div className={`${btn} ml-[3px] w-[31px] bg-linear-to-b from-[#e0938a] to-[#c03828]`}><svg viewBox="0 0 10 8" className="h-2 w-[10px]"><path d="M1 0l8 8M9 0L1 8" stroke="#fff" strokeWidth="2" /></svg></div>
      </div>
      <svg viewBox="276 143 1369 836" className="h-[836px] w-[1369px]">
        <Legend />
        <SitePlan />
        <g fill="#141414" stroke="#4c4c4c">
          <path d="M336 864l17 21-8-2v23h-18v-23l-8 2z" /><path d="M349 911h23l-1-8 21 17-21 17 1-8h-23z" /><circle cx="336" cy="920" r="8.5" /><circle cx="336" cy="920" r="2.5" fill="#999" />
          <path d="M331 885l5 6 5-6M336 891v7M358 915l14 9M372 915l-14 9" fill="none" stroke="#777" strokeWidth="1.5" />
        </g>
      </svg>
    </div>
  );
}

/* ---------- right dock ---------- */
const used = "00PointCloud check PCRS_ARBRE PCRS_BATI PCRS_BORDURE_FE PCRS_BORNE_FONTAINE PCRS_BOUCHE_A_CLE PCRS_CHEMIN PCRS_CLOTURE PCRS_ESCALIER PCRS_ESPACE_VERT PCRS_GRILLE_CANIVEAU PCRS_HAIE PCRS_LAMPADAIRE PCRS_NATURE_SOL PCRS_PLAQUE PCRS_POTEAU PCRS_PROEMINENCE_BATI PCRS_SEUIL PCRS_SIGNA_V".split(" ");
const unused = "ImagePoint PCRS_ABRI_BUS PCRS_ARBRE_ENTOURAGE PCRS_ARMOIRE PCRS_AVALOIR PCRS_BAC_FLEURS PCRS_BORDURETTE PCRS_BORNE_LUMINEUSE PCRS_BOUCHE_ARROSAGE PCRS_CANIVEAU_AXE PCRS_CHAUSSEE PCRS_DIVERS_LIGNE PCRS_DIVERS_POINT PCRS_DIVERS_SURFACE".split(" ");
const V8 = ({ on }: { on?: boolean }) => (
  <div className={`flex h-[14px] w-[15px] shrink-0 items-center justify-center border text-[11px] leading-none ${on ? "border-[#2858c8] bg-[#5088f0] text-white" : "border-[#ccc] bg-[#e8e8e8] text-[#888]"}`}>v8</div>
);
const Pick = ({ w, children }: { w: string; children: React.ReactNode }) => (
  <div className={`${w} flex h-[16px] shrink-0 items-center justify-between rounded-[3px] border border-[#777] bg-linear-to-b from-[#f6f6f6] to-[#dadada] pr-[4px] pl-[3px]`}>{children}<Caret cls="w-[8px] h-[5px]" /></div>
);

function RightDock() {
  return (
    <div className="flex w-[277px] shrink-0 flex-col border-r-[3px] border-l-[7px] border-r-[#20282c] border-l-[#b0b0d8] bg-[#f0f0f0] font-['Liberation_Sans'] text-[12px] tracking-[-0.4px]">
      <div className="font-['Open_Sans'] tracking-normal"><PanelHead title="Level Display - View 1" pins={1} /></div>
      <div className="mt-[4px] flex h-[26px] items-center pl-[7px]"><Icon n="viewsStack" cls="size-[21px]" /><span className="w-[12px]" /><Icon n="apply" cls="size-[20px]" /><span className="w-[12px]" /><Pick w="w-[102px]">View Display</Pick></div>
      <div className="mt-[6px] flex h-[30px] items-center pl-[7px]">
        <Icon n="pickLevel" cls="size-[22px]" />
        <div className="ml-[9px] flex size-[28px] items-center justify-center border border-[#667] bg-linear-to-b from-[#fcd48c] to-[#f8b850]"><Icon n="hier" cls="size-[20px]" /></div>
        <span className="w-[8px]" /><Icon n="funnel" cls="size-[19px]" />
        <span className="ml-[6px] w-[35px]">(none)</span><Caret cls="w-[8px] h-[5px]" /><span className="w-[10px]" /><Pick w="w-[55px]">Levels</Pick>
        <span className="w-[8px]" /><Icon n="handOver" cls="size-[22px]" /><span className="w-[7px]" /><Caret cls="w-[8px] h-[5px]" />
      </div>
      <div className="mt-[3px] mr-[2px] flex h-[142px] shrink-0 flex-col border-t-2 border-l-2 border-[#777] bg-white pt-[3px] pl-[6px]">
        <div className="flex h-[18px] items-center">
          <div className="flex size-[9px] items-center justify-center border border-[#888] bg-white"><div className="h-px w-[5px] bg-[#234]" /></div><div className="h-px w-[4px] bg-[#888]" />
          <V8 on /><span className="ml-[3px] border border-[#9cdcf4] bg-[#e8f4fa] px-px leading-[13px] tracking-[-0.7px] whitespace-nowrap">Seed_GeotoMain_PCRS.dgn, Model</span>
        </div>
        {["All Camposition.dgn", "All Reduce.dgn", "Parts.dgn"].map((t, i) => (
          <div key={t} className="flex h-[18px] items-center pl-[21px]">
            <div className={`w-px self-start bg-[#888] ${i === 2 ? "h-[10px]" : "h-[18px]"}`} /><div className="h-px w-[8px] bg-[#888]" />
            <V8 /><span className="ml-[4px] tracking-[-0.75px] text-[#e00018]">{t}</span>
          </div>
        ))}
      </div>
      <div className="mt-[7px] flex min-h-0 grow flex-col border-t-2 border-l-2 border-[#777] bg-white">
        <div className="flex min-h-0 grow">
          <div className="flex w-[248px] flex-col overflow-hidden">
            <div className="flex h-[22px] shrink-0 items-center border-b border-[#888] bg-linear-to-b from-white to-[#f0f0f0]">
              <span className="w-[172px] pl-[8px]">Name</span><span className="flex h-full w-[58px] items-center border-l border-[#ddd] pl-[19px]">Used</span><Caret c="#7aa4c0" cls="w-[6px] h-[4px] -mt-2" />
            </div>
            <div className="ml-px pt-[2px]">
              {used.map((t) => <div key={t} className="flex h-[17px] items-center bg-[#3399ff] pl-[3px] text-[11.6px] leading-[17px] font-bold tracking-[0.4px] text-white"><span className="w-[203px]">{t}</span><span className="size-[5px] rounded-full bg-white" /></div>)}
              <div className="h-[17px] bg-[#008080] pl-[3px] leading-[17px] font-bold text-white">0</div>
              {unused.map((t) => <div key={t} className="h-[17px] bg-[#3399ff] pl-[3px] text-[11.6px] leading-[17px] tracking-[-0.75px] text-white">{t}</div>)}
            </div>
          </div>
          <div className="flex w-[15px] flex-col items-center bg-[#f0f0f0]">
            <svg viewBox="0 0 8 5" className="mt-[7px] mb-[8px] h-1 w-[7px] shrink-0"><path d="M0 5h8L4 0z" /></svg>
            <div className="flex h-[308px] w-[13px] shrink-0 flex-col items-center justify-center gap-[2px] rounded-[2px] border border-[#999] bg-linear-to-r from-[#f6f6f6] to-[#cfcfcf]">
              <div className="h-px w-[7px] bg-[#555]" /><div className="h-px w-[7px] bg-[#555]" /><div className="h-px w-[7px] bg-[#555]" />
            </div>
            <div className="grow" /><Caret cls="w-[7px] h-[4px] mb-[6px]" />
          </div>
        </div>
      </div>
    </div>
  );
}

/* ---------- application frame ---------- */
const menus = ["File", "Edit", "Element", "Settings", "Tools", "Utilities", "Workspace", "Window", "Help"];
const hot: Record<string, number> = { Workspace: 4 };
const menuW: Record<string, string> = { File: "w-[29px]", Edit: "w-[31.5px]", Element: "w-[51px]", Settings: "w-[51px]", Tools: "w-[39px]", Utilities: "w-[46px]", Workspace: "w-[68px]", Window: "w-[52px]", Help: "w-[30px]" };
const palTools = "palette boxes shapes penlink | pencils | palettes2 paletteBulb";

export default function App() {
  return (
    <div className="flex h-[1042px] w-[1922px] flex-col overflow-hidden bg-[#f0f0f0] font-['Open_Sans',sans-serif] text-[12px] text-[#111]">
      <div className="flex h-[22px] shrink-0 items-center justify-between border-b border-[#34465a] bg-[linear-gradient(90deg,#8a9cac_0,#a4b6c6_7%,#9aaebe_20%,#5c7488_23%,#4c6880_28%,#7aa0bc_32%,#5a7c98_35%,#3c5870_38%,#4a7088_42%,#5a90b0_44.5%,#8cd8ec_46%,#b0f0fa_51%,#a4f0fa_62%,#b8f8fc_69%,#78b8dc_72%,#5a88ac_75%,#40607c_80%,#6a9cc0_84%,#88b0d4_90%,#6888a8_97%,#587898_100%)]">
        <div className="flex items-center pl-[1px]">
          <div className="flex h-[18px] w-[15px] items-center justify-center bg-[#0c3c58] text-[15px] leading-none text-white italic">µ</div>
          <span className="ml-[5px] text-[12px] tracking-[-0.19px] whitespace-nowrap">Seed_GeotoMain_PCRS.dgn [3D - V8 DGN] - MicroStation V8i (SELECTseries 3)</span>
        </div>
        <div className="mr-[4px] flex h-[18px] w-[103px] self-start rounded-b-[4px] border border-t-0 border-[#3a5068]">
          <div className="flex w-[29px] items-center justify-center border-r border-[#3a5068]"><div className="mt-1 h-[4px] w-3 rounded-[1px] border border-[#556] bg-white" /></div>
          <div className="flex w-[27px] items-center justify-center border-r border-[#3a5068]"><svg viewBox="0 0 12 12" className="size-3"><path d="M4 1h7v7H9M1 4h7v7H1z" stroke="#fff" strokeWidth="1.6" fill="none" /></svg></div>
          <div className="flex grow items-center justify-center"><svg viewBox="0 0 10 10" className="size-[10px]"><path d="M1 1l8 8M9 1L1 9" stroke="#fff" strokeWidth="2.6" /></svg></div>
        </div>
      </div>
      <div className="flex h-[23px] shrink-0 items-center pt-[3px] pl-[2px]">
        <div className="mr-[11px] h-[10px] border-l-2 border-dotted border-[#9c9c9c]" />
        {menus.map((m) => { const i = hot[m] ?? 0; return <span key={m} className={`${menuW[m]} font-['Liberation_Sans'] text-[12px] tracking-[-0.4px]`}>{m.slice(0, i)}<u>{m[i]}</u>{m.slice(i + 1)}</span>; })}
      </div>
      <div className="flex h-[34px] shrink-0 font-['Liberation_Sans']">
        <Bar w="w-[548px]">
          <div className="flex w-[28px] justify-center"><Icon n="attr" /></div><div className="flex w-[23px] justify-center"><Caret /></div>
          <div className="h-7 w-px bg-[#9a9a9a]" />
          <div className="mx-[3px] flex h-[20px] w-[128px] shrink-0 items-center justify-between rounded-[3px] border border-[#666] bg-linear-to-b from-[#f2f2f2] to-[#d8d8d8] pr-[4px] pl-[3px] text-[12px]">0<Caret cls="w-[8px] h-[5px]" /></div>
          <div className="h-7 w-px bg-[#9a9a9a]" />
          <div className="ml-[7px] size-[18px] border border-[#333] bg-[#ffc000]" /><span className="ml-[9px] w-[21px] text-[12px] tracking-[-0.5px]">40</span><Caret /><div className="ml-[5px] h-7 w-px bg-[#9a9a9a]" />
          <span className="w-[6px]" /><Icon n="lstyle" cls="size-[23px]" /><span className="w-[28px] overflow-visible text-[12px] tracking-[-0.5px]">Conti</span><Caret /><div className="ml-[5px] h-7 w-px bg-[#9a9a9a]" />
          <span className="w-[6px]" /><Icon n="weight" cls="size-[20px]" /><span className="ml-[12px] w-[19px] text-[12px]">6</span><Caret /><div className="ml-[6px] h-7 w-px bg-[#9a9a9a]" />
          <span className="w-[6px]" /><Icon n="globe" cls="size-[21px]" /><span className="ml-[9px] w-[20px] text-[12px]">0</span><Caret /><div className="ml-[6px] h-7 w-px bg-[#9a9a9a]" />
          <span className="w-[6px]" /><Icon n="prio" cls="size-[21px]" /><span className="ml-[10px] w-[20px] text-[12px] text-[#999]">0</span><Caret c="#888" />
        </Bar>
        <Bar w="w-[290px]"><Tools list="scaleBox delBox line1 crossX trimT hash chamfer bracket fillet starCorner" /></Bar>
        <Bar w="w-[218px]"><Tools list={palTools} /></Bar>
        <Bar w="w-[150px]"><Tools list="circArrow curveDown curveList graph curveArrow" /></Bar>
        <Bar w="w-[96px]"><Tools list="stackGreen v stackYellow v" /></Bar>
        <Bar w="w-[212px]"><Tools list="bulbStars polyBlue polyBlue2 polyBlack | grid gridX donut" /></Bar>
        <Bar w="w-[363px]"><Tools list="copyUp moveUp stretch rotate mirror array | align overlap curves2 snapEnd | scaleBox2 | bulbStars2" /></Bar>
      </div>
      <div className="flex h-[34px] shrink-0">
        <Bar w="w-[452px]"><Tools list="cubeBtn v imgList v clipVol v mountain v stackGreen v stackYellow v searchStar v info tree folderSearch keyPress target" /></Bar>
        <Bar w="w-[360px]">
          <Letters w="w-[17px]" s="text-[20px] text-[#e01010]">R</Letters>
          <Letters w="w-[38px]" s="text-[19px]"><span className="text-[#e01010]">R</span><span className="text-[#1010d0]">M</span></Letters>
          <Letters w="w-[25px]" s="text-[17px] text-[#1010d0]">M</Letters>
          <Letters w="w-[27px]" s="text-[21px]"><span className="text-[#e01010]">R</span><b className="text-[#00e020]">S</b></Letters>
          <div className="relative">
            <Letters w="w-[27px]" s="text-[21px]"><span className="text-[#e01010]">R</span><b className="text-[#00e020]">S</b></Letters>
            <svg viewBox="0 0 12 24" className="absolute -top-[2px] left-[2px] h-6 w-3"><path d="M1 23L11 1" stroke="#111" strokeWidth="2" /></svg>
          </div>
          <Letters w="w-[25px]" s="text-[19px] font-black text-[#f000e0]">D</Letters>
          <Letters w="w-[29px]" s="text-[20px]"><span className="text-[#f000e0]">D</span><b className="text-[#00e020]">S</b></Letters>
          <svg viewBox="0 0 158 28" className="h-7 w-[158px] overflow-visible" fill="none">
            <path d="M3 3h20v21H3zM3 14h20M30 3h21v21H30z" stroke="#1010b0" strokeWidth="1.5" /><path d="M7 14v10M11 14v10M15 14v10M19 14v10M34 4v20M38 4v20M42 4v20M46 4v20" stroke="#e01010" strokeWidth="1.3" />
            <path d="M68 23V3M63 8l5-6 5 6M57 12v10M79 12v10M125 14V1M120 6l5-5 5 5M114 5v9M137 5v9" stroke="#101050" strokeWidth="1.8" /><path d="M97 24V5M89 12l8-8 8 8M152 13V1M146 7l6-6 6 6" stroke="#1818d0" strokeWidth="2" />
            <text x="118" y="25" fontSize="12" fill="#e01010" fontFamily="Liberation Sans">V3</text><text x="145" y="25" fontSize="12" fill="#e01010" fontFamily="Liberation Sans">V3</text>
          </svg>
        </Bar>
        <Bar w="w-[348px]"><Tools list="newFile open save | printer | cut copy paste | undo redo | world | help" /></Bar>
        <Bar w="w-[38px]"><Tools list="google" /></Bar>
        <Bar w="w-[247px]"><Tools list="swirl | cubeT cubeR cubeB cubeF | cubeW cubeL cubeA" /></Bar>
        <Bar w="w-[226px]"><Tools list="page v | pageIn pageCut pageDash pageBrush carR carL" /></Bar>
        <Bar w="w-[206px]"><Tools list="palette boxes shapes penlink pencils palettes2 paletteBulb" /></Bar>
      </div>
      <div className="flex h-[866px] shrink-0">
        <LeftDock />
        <ViewWindow />
        <RightDock />
      </div>
      <div className="flex h-[35px] shrink-0 items-center border-b border-[#a0a0a0] font-['Liberation_Sans']">
        <Bar w="w-[520px]">
          <Tools list="cubes sun v" /><Sep /><Tools list="brush zoomIn zoomOut zoomBox" />
          <div className="flex size-[28px] shrink-0 items-center justify-center border-2 border-[#3a5a98] bg-[#f6b060]"><Icon n="fit" cls="size-[21px]" /></div>
          <Tools list="swirl hand feet plane | viewPrev viewNext | viewCopy cone clipCube mask" />
        </Bar>
        <Bar w="w-[419px]">
          {["back", "fwd", "slope"].map((n) => <div key={n} className="flex w-[43px] shrink-0 items-center pl-[3px]"><Icon n={n} cls="size-[21px]" /><span className="w-[7px]" /><Caret c="#777" cls="w-[7px] h-[4px]" /></div>)}
          <div className="flex h-[20px] w-[127px] shrink-0 items-center rounded-[3px] border border-[#666] bg-linear-to-b from-[#f2f2f2] to-[#d8d8d8] pr-[5px] pl-[2px] text-[12px] tracking-[-0.4px]"><Icon n="sheets" cls="size-4" /><span className="ml-[6px] grow">Model</span><Caret cls="w-[8px] h-[5px]" /></div>
          <Tools list="| sheets |" />
          <div className="ml-[2px] flex h-[17px] shrink-0 text-[12px] leading-[17px]">
            {[1, 2, 3, 4, 5, 6, 7, 8].map((n) => <div key={n} className={`w-[14px] border-r-2 border-b border-[#222] text-center ${n === 1 ? "bg-[#fcc868]" : "bg-[#f4f4f4]"}`}>{n}</div>)}
          </div>
        </Bar>
        <Bar w="w-[519px]">
          <Tools list="acs | snapNear" />
          <div className="flex h-[28px] w-[28px] shrink-0 items-center justify-center border border-[#3a5a98] bg-[#e8a858]"><Icon n="snapKey" cls="size-[22px]" /></div>
          <Tools list="snapMid snapCtr snapOrg snapBis snapInt snapTan snapTan2 snapPerp snapPerp2 snapPar snapPt snapOn snapMulti snapM2 snapM3" />
        </Bar>
        <Bar w="w-[363px]">
          <Icon n="dimX" cls="size-[17px]" /><div className="mr-[5px] ml-[5px] h-[17px] w-[90px] shrink-0 border border-[#999] bg-white pl-[4px] text-[11px] leading-[15px] text-[#888]">0.00</div><div className="h-8 w-px bg-[#aaa]" />
          <span className="w-[6px]" /><Icon n="dimA" cls="size-[15px]" /><div className="mr-[5px] ml-[5px] h-[17px] w-[90px] shrink-0 border border-[#999] bg-white pl-[4px] text-[11px] leading-[15px] tracking-[-0.3px] text-[#888]">0.0000g</div><div className="h-8 w-px bg-[#aaa]" />
          <span className="w-[25px] pl-[7px] text-[16px] font-bold">Z</span><div className="h-[17px] w-[90px] shrink-0 border border-[#999] bg-white" />
        </Bar>
      </div>
      <div className="flex h-[26px] shrink-0 items-center pt-[2px] font-['Liberation_Sans'] text-[12px]">
        <span className="w-[393px] pl-[3px] text-[12px] tracking-[-0.45px]">Display complete</span>
        <div className="h-[20px] border-l-2 border-dotted border-[#9c9c9c]" />
        <div className="ml-[3px] flex h-[23px] w-[27px] items-start justify-end border-t border-l border-[#aaa] pt-[2px] pr-[1px]"><svg viewBox="0 0 6 4" className="h-[4px] w-[6px]"><path d="M0 4h6L3 0z" /></svg></div>
        <span className="grow pl-[2px] text-[12px] tracking-[-0.6px]">At least one reference model was not found.</span>
        {[["w-[27px]", "snapNear"], ["w-[27px]", "lock"], ["w-[114px]", "0"], ["w-[104px]", ""], ["w-[26px]", ""], ["w-[26px]", ""], ["w-[26px]", ""], ["w-[26px]", "scroll"], ["w-[26px]", "house"], ["w-[26px]", ""], ["w-[29px]", "tray"]].map(([w, n], i) => (
          <div key={i} className={`${w} mr-[2px] flex h-[23px] shrink-0 items-center border-t border-l border-[#aaa] pl-px last:mr-0 ${n === "0" ? "" : "justify-center"}`}>{n === "0" ? "0" : n && <Icon n={n} cls="size-[15px]" />}</div>
        ))}
      </div>
      <div className="h-[2px] shrink-0 bg-[#181c24]" />
    </div>
  );
}
